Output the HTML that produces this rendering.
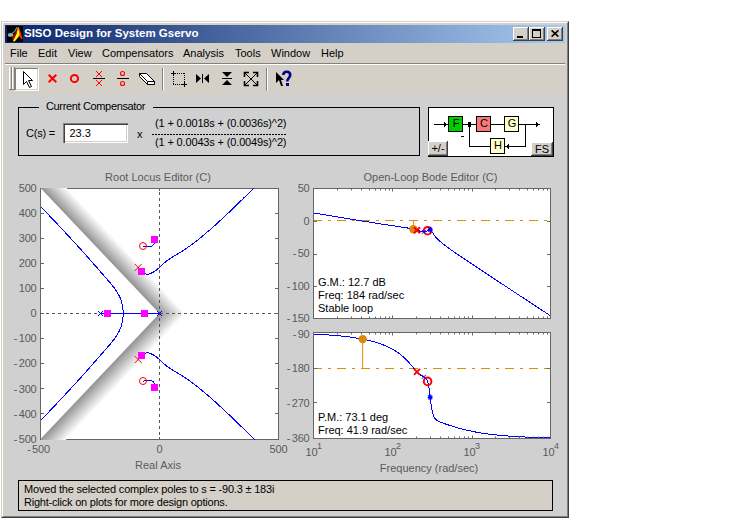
<!DOCTYPE html>
<html><head><meta charset="utf-8">
<style>
*{margin:0;padding:0;box-sizing:border-box}
html,body{width:750px;height:520px;overflow:hidden;background:#fff;font-family:"Liberation Sans",sans-serif}
.abs{position:absolute}
#win{position:absolute;left:1px;top:21px;width:568px;height:497px;background:#d4d0c8;
 border-top:1px solid #d4d0c8;border-left:1px solid #d4d0c8;border-right:1px solid #404040;border-bottom:1px solid #404040}
#win2{position:absolute;left:2px;top:22px;width:566px;height:495px;
 border-top:1px solid #fff;border-left:1px solid #fff;border-right:1px solid #808080;border-bottom:1px solid #808080}
#title{position:absolute;left:5px;top:25px;width:560px;height:18px;background:linear-gradient(to right,#0a246a,#a6caf0)}
#ttext{position:absolute;left:24px;top:27px;font-weight:bold;font-size:11.5px;color:#fff;white-space:nowrap;line-height:13px}
.tb{position:absolute;top:27px;width:16px;height:14px;background:#d4d0c8;
 box-shadow:inset -1px -1px #404040, inset 1px 1px #fff, inset -2px -2px #808080, inset 2px 2px #d4d0c8}
.menu{position:absolute;top:47px;font-size:11px;color:#000;white-space:nowrap;line-height:13px}
#figbg{position:absolute;left:5px;top:94px;width:560px;height:420px;background:#d0d0d0}
svg.fig{position:absolute;left:0;top:0}
.t11{font-size:11px;white-space:nowrap;line-height:13px;position:absolute;color:#000}
</style></head><body>
<div id="win"></div><div id="win2"></div>
<div id="title"></div>
<svg class="abs" style="left:7px;top:26px" width="16" height="16" viewBox="0 0 16 16">
 <rect width="16" height="16" fill="#000"/>
 <ellipse cx="3.6" cy="8.9" rx="2.8" ry="1.9" fill="#a3abae"/>
 <path d="M1,8.6 L2.5,7.6 M5.2,7 L7,6 L8.3,4.6 L9.2,2.5 L10,1.2" stroke="#1fb0b0" stroke-width="1.2" fill="none"/>
 <path d="M5,12.5 L6.5,9.5 L8.5,6.5 L10,3.5 L10.6,1 L12.2,4 L12.6,9 L9.5,13 L7.2,15.5 Z" fill="#b00000"/>
 <path d="M10.6,1 L12,1.2 L13.6,6 L15.6,12.8 L14.6,13.2 L12.4,10.5 Z" fill="#ff2a00"/>
 <path d="M10.6,3 L12.3,5.5 L12.4,9.5 L10,12.8 L7.6,15.6 L6,15 L7.6,12 L9.6,8 L10.2,5 Z" fill="#ffff00"/>
 <path d="M10.6,1.2 L11.9,2 L12.3,5.5 L10.4,3.6 Z" fill="#ff8c00"/>
</svg>
<div id="ttext">SISO Design for System Gservo</div>
<div class="tb" style="left:513px"><div class="abs" style="left:4px;top:9px;width:6px;height:2px;background:#000"></div></div>
<div class="tb" style="left:529px"><div class="abs" style="left:3px;top:2px;width:9px;height:9px;border:1px solid #000;border-top-width:2px"></div></div>
<div class="tb" style="left:547px"><svg class="abs" style="left:4px;top:3px" width="8" height="7"><path d="M0.6,0.4 L7.4,6.6 M7.4,0.4 L0.6,6.6" stroke="#000" stroke-width="1.6"/></svg></div>

<div class="menu" style="left:10px">File</div>
<div class="menu" style="left:38px">Edit</div>
<div class="menu" style="left:68px">View</div>
<div class="menu" style="left:102px">Compensators</div>
<div class="menu" style="left:183px">Analysis</div>
<div class="menu" style="left:235px">Tools</div>
<div class="menu" style="left:271px">Window</div>
<div class="menu" style="left:321px">Help</div>
<div class="abs" style="left:5px;top:63px;width:560px;height:1px;background:#808080"></div>
<div class="abs" style="left:5px;top:64px;width:560px;height:1px;background:#fff"></div>

<!-- toolbar -->
<svg class="abs" style="left:0;top:60px" width="300" height="34" shape-rendering="crispEdges">
 <g transform="translate(0,-60)">
 <!-- grip -->
 <rect x="9" y="67" width="1" height="23" fill="#fff"/><rect x="11" y="67" width="1" height="23" fill="#808080"/><rect x="9" y="89" width="3" height="1" fill="#808080"/>
 <rect x="12" y="67" width="1" height="23" fill="#fff"/><rect x="14" y="67" width="1" height="23" fill="#808080"/><rect x="12" y="89" width="3" height="1" fill="#808080"/>
 <!-- pressed button -->
 <rect x="15" y="68" width="24" height="23" fill="#fff"/><rect x="37" y="69" width="1" height="21" fill="#d4d0c8"/><rect x="16" y="89" width="22" height="1" fill="#d4d0c8"/>
 <rect x="15" y="68" width="23" height="1" fill="#808080"/><rect x="15" y="68" width="1" height="22" fill="#808080"/>
 <path d="M23.5,71.5 L23.5,84.5 L26.5,81.5 L29.5,87.5 L31.5,86.5 L28.5,80.5 L32.5,80.5 Z" fill="#fff" stroke="#000" stroke-width="1" shape-rendering="auto"/>
 <!-- red x -->
 <path d="M48.7,74.7 L56.3,82.3 M56.3,74.7 L48.7,82.3" stroke="#ff0000" stroke-width="2" shape-rendering="auto"/>
 <circle cx="74.5" cy="78.5" r="3.6" stroke="#ff0000" stroke-width="2" fill="none" shape-rendering="auto"/>
 <!-- x/x -->
 <path d="M96,71 L102,77 M102,71 L96,77 M96,80 L102,86 M102,80 L96,86" stroke="#ff0000" stroke-width="1" shape-rendering="auto"/>
 <rect x="93" y="78" width="12" height="1" fill="#000"/>
 <!-- o/o -->
 <circle cx="122.5" cy="73.5" r="2.0" stroke="#ff0000" stroke-width="1.15" fill="none" shape-rendering="auto"/>
 <circle cx="122.5" cy="83.5" r="2.0" stroke="#ff0000" stroke-width="1.15" fill="none" shape-rendering="auto"/>
 <rect x="117" y="78" width="12" height="1" fill="#000"/>
 <!-- eraser -->
 <g shape-rendering="auto">
 <path d="M139.5,73.5 L146.5,73.5 L154.5,81.5 L147.5,81.5 Z" fill="#fff" stroke="#000"/>
 <path d="M147.5,81.5 L154.5,81.5 L154.5,84.5 L147.5,84.5 Z" fill="#fff" stroke="#000"/>
 <path d="M139.5,73.5 L147.5,81.5 L147.5,84.5 L139.5,76.5 Z" fill="#fff" stroke="#000"/>
 </g>
 <rect x="162" y="68" width="1" height="22" fill="#808080"/><rect x="163" y="68" width="1" height="22" fill="#fff"/>
 <!-- zoom rect -->
 <path d="M173,73.5 h11 M173,84.5 h11 M173.5,73 v11 M184.5,73 v11" stroke="#000" stroke-dasharray="1 1"/>
 <rect x="171" y="73" width="5" height="1" fill="#000"/><rect x="173" y="71" width="1" height="5" fill="#000"/>
 <rect x="182" y="84" width="5" height="1" fill="#000"/><rect x="184" y="82" width="1" height="5" fill="#000"/>
 <!-- hzoom -->
 <path d="M196,74 L196,83 L201,78.5 Z M209,74 L209,83 L204,78.5 Z" fill="#000" shape-rendering="auto"/>
 <rect x="202" y="74" width="1" height="9" fill="#000"/>
 <!-- vzoom -->
 <path d="M222,72 L232,72 L227,77 Z M222,85 L232,85 L227,80 Z" fill="#000" shape-rendering="auto"/>
 <rect x="222" y="78" width="10" height="1" fill="#000"/>
 <!-- full view -->
 <g stroke="#000" fill="none" shape-rendering="auto">
 <path d="M245,73 L257,85 M257,73 L245,85"/>
 <path d="M244.5,77 V72.5 H249" stroke-width="1.6"/><path d="M253,72.5 H257.5 V77" stroke-width="1.6"/>
 <path d="M244.5,81 V85.5 H249" stroke-width="1.6"/><path d="M253,85.5 H257.5 V81" stroke-width="1.6"/>
 </g>
 <rect x="266" y="68" width="1" height="23" fill="#808080"/><rect x="267" y="68" width="1" height="23" fill="#fff"/>
 <!-- help -->
 <path d="M276,72 L276,83 L279,80 L281,86 L283,86 L281,80 L284,80 Z" fill="#000" shape-rendering="auto"/>
 <path d="M283.3,75 C283.3,70.6 290.2,70.6 290.2,75 C290.2,78.2 287.2,78 287.2,81.5" stroke="#000080" stroke-width="2.6" fill="none" shape-rendering="auto"/>
 <rect x="286" y="83" width="2.5" height="3" fill="#000080"/>
 </g>
</svg>

<div id="figbg"></div>
<!-- compensator panel -->
<div class="abs" style="left:18px;top:107px;width:402px;height:49px;border:1px solid #000"></div>
<div class="abs" style="left:39px;top:100px;width:114px;height:14px;background:#d0d0d0"></div>
<div class="t11" style="left:46px;top:100px;letter-spacing:-0.35px">Current Compensator</div>
<div class="t11" style="left:26px;top:127px;letter-spacing:-0.2px">C(s) =</div>
<div class="abs" style="left:63px;top:123px;width:65px;height:20px;background:#fff;box-shadow:inset 1px 1px #808080, inset 2px 2px #404040, inset -1px -1px #fff, inset -2px -2px #d4d0c8"></div>
<div class="t11" style="left:69.5px;top:127px">23.3</div>
<div class="t11" style="left:137px;top:128px">x</div>
<div class="t11" style="left:155px;top:117px;letter-spacing:-0.15px">(1 + 0.0018s + (0.0036s)^2)</div>
<div class="abs" style="left:152px;top:134px;width:134px;height:1px;background:repeating-linear-gradient(to right,#000 0 2px,transparent 2px 3px)"></div>
<div class="t11" style="left:155px;top:136px;letter-spacing:-0.15px">(1 + 0.0043s + (0.0049s)^2)</div>

<!-- block diagram -->
<div class="abs" style="left:428px;top:107px;width:126px;height:50px;background:#fff;border:1px solid #000"></div>
<svg class="abs" style="left:428px;top:107px" width="126" height="50" shape-rendering="crispEdges">
 <g transform="translate(-428,-107)">
 <rect x="434" y="124" width="14" height="1" fill="#000"/><path d="M444,122 L448,124.5 L444,127 Z" fill="#000"/>
 <rect x="448" y="116" width="14" height="15" fill="#00cc00" stroke="#000" stroke-width="1" transform="translate(0.5,0.5)"/>
 <rect x="463" y="124" width="14" height="1" fill="#000"/>
 <rect x="468" y="122" width="3" height="5" fill="#000"/>
 <rect x="476" y="116" width="14" height="15" fill="#f87878" stroke="#000" transform="translate(0.5,0.5)"/>
 <rect x="491" y="124" width="13" height="1" fill="#000"/>
 <rect x="504" y="116" width="14" height="15" fill="#ffffcc" stroke="#000" transform="translate(0.5,0.5)"/>
 <rect x="519" y="124" width="20" height="1" fill="#000"/><path d="M536,122 L540,124.5 L536,127 Z" fill="#000"/>
 <rect x="525" y="124" width="1" height="23" fill="#000"/>
 <rect x="505" y="146" width="21" height="1" fill="#000"/><path d="M509,144 L505,146.5 L509,149 Z" fill="#000"/>
 <rect x="490" y="138" width="14" height="15" fill="#ffffcc" stroke="#000" transform="translate(0.5,0.5)"/>
 <rect x="469" y="146" width="21" height="1" fill="#000"/>
 <rect x="469" y="127" width="1" height="20" fill="#000"/>
 <rect x="461" y="136" width="3" height="1" fill="#000"/>
 </g>
</svg>
<div class="abs" style="left:448px;top:115px;width:16px;height:16px;font-size:11px;text-align:center;line-height:17px;font-weight:normal">F</div>
<div class="abs" style="left:476px;top:115px;width:16px;height:16px;font-size:11px;text-align:center;line-height:17px">C</div>
<div class="abs" style="left:504px;top:115px;width:16px;height:16px;font-size:11px;text-align:center;line-height:17px">G</div>
<div class="abs" style="left:490px;top:137px;width:16px;height:16px;font-size:11px;text-align:center;line-height:17px">H</div>
<div class="abs" style="left:428px;top:141px;width:20px;height:15px;background:#d4d0c8;box-shadow:inset -1px -1px #404040, inset 1px 1px #fff, inset -2px -2px #808080;font-size:11px;text-align:center;line-height:14px">+/-</div>
<div class="abs" style="left:531px;top:142px;width:22px;height:14px;background:#d4d0c8;box-shadow:inset -1px -1px #404040, inset 1px 1px #fff, inset -2px -2px #808080;font-size:11px;text-align:center;line-height:14px">FS</div>

<svg class="fig" width="750" height="520">
<defs>
<clipPath id="rlclip"><rect x="41" y="188" width="237" height="252"/></clipPath>
<clipPath id="magclip"><rect x="313" y="188" width="238" height="131"/></clipPath>
<clipPath id="phclip"><rect x="313" y="332" width="238" height="107"/></clipPath>
<linearGradient id="gb" gradientUnits="userSpaceOnUse" x1="0" y1="0" x2="24" y2="0"><stop offset="0" stop-color="#8c8c8c"/><stop offset="0.35" stop-color="#b4b4b4"/><stop offset="1" stop-color="#ffffff"/></linearGradient>
</defs>
<rect x="40" y="188" width="239" height="252" fill="#fff"/>
<rect x="313" y="188" width="238" height="131" fill="#fff"/>
<rect x="313" y="332" width="238" height="107" fill="#fff"/>
<rect x="40.5" y="188.5" width="238" height="251" fill="none" stroke="#666" stroke-width="1"/>
<clipPath id="upc"><rect x="40" y="188" width="239" height="125.50"/></clipPath>
<clipPath id="loc"><rect x="40" y="313.50" width="239" height="126.50"/></clipPath>
<linearGradient id="gup" x1="0" y1="1" x2="0" y2="0"><stop offset="0" stop-color="#929292"/><stop offset="0.5" stop-color="#c9c9c9"/><stop offset="1" stop-color="#fff"/></linearGradient>
<linearGradient id="gdn" x1="0" y1="0" x2="0" y2="1"><stop offset="0" stop-color="#929292"/><stop offset="0.5" stop-color="#c9c9c9"/><stop offset="1" stop-color="#fff"/></linearGradient>
<g clip-path="url(#rlclip)">
<g clip-path="url(#upc)"><g transform="matrix(0.68807 0.72565 -0.72565 0.68807 159.50 313.50)"><rect x="-600" y="-19" width="700" height="19" fill="url(#gup)"/></g></g>
<g clip-path="url(#loc)"><g transform="matrix(0.68807 -0.72565 0.72565 0.68807 159.50 313.50)"><rect x="-600" y="0" width="700" height="19" fill="url(#gdn)"/></g></g>
</g>
<line x1="40" y1="313.5" x2="278" y2="313.5" stroke="#555" stroke-width="1" stroke-dasharray="3 3" stroke-dashoffset="0" shape-rendering="crispEdges"/>
<line x1="159.5" y1="189" x2="159.5" y2="439" stroke="#555" stroke-width="1" stroke-dasharray="3 3" stroke-dashoffset="3" shape-rendering="crispEdges"/>
<rect x="159" y="189" width="1" height="2" fill="#555"/><rect x="159" y="437" width="1" height="2" fill="#555"/>
<g clip-path="url(#rlclip)" fill="none" stroke="#0000ff" stroke-width="1" shape-rendering="crispEdges">
<path d="M154.7,238.4 L154.8,239.1 L154.9,239.8 L154.9,240.6 L154.9,241.4 L154.8,242.1 L154.6,242.7 L154.4,243.3 L154.1,243.9 L153.8,244.4 L153.5,244.8 L153.1,245.2 L152.6,245.6 L152.1,245.9 L151.5,246.1 L150.9,246.3 L150.2,246.4 L149.4,246.4 L148.6,246.4 L147.8,246.4 L147.1,246.3 L146.4,246.2 L145.7,246.2 L144.9,246.1 L144.2,246.0 L143.4,246.0 L143.0,246.0"/>
<path d="M154.7,388.6 L154.8,387.9 L154.9,387.2 L154.9,386.4 L154.9,385.6 L154.8,384.9 L154.6,384.3 L154.4,383.7 L154.1,383.1 L153.8,382.6 L153.5,382.2 L153.1,381.8 L152.6,381.4 L152.1,381.1 L151.5,380.9 L150.9,380.7 L150.2,380.6 L149.4,380.6 L148.6,380.6 L147.8,380.6 L147.1,380.7 L146.4,380.8 L145.7,380.8 L144.9,380.9 L144.2,381.0 L143.4,381.0 L143.0,381.0"/>
<path d="M138.2,267.5 L138.5,268.0 L138.7,268.5 L139.0,269.0 L139.4,269.5 L139.7,270.0 L140.0,270.5 L140.4,270.9 L140.8,271.3 L141.2,271.8 L141.6,272.1 L142.1,272.5 L142.6,272.9 L143.1,273.2 L143.7,273.5 L144.2,273.7 L144.9,273.9 L145.6,274.0 L146.3,274.1 L147.2,274.1 L148.0,274.1 L148.7,274.0 L149.4,273.8 L150.0,273.6 L150.6,273.4 L151.2,273.2 L151.8,272.9 L152.3,272.6 L152.9,272.4 L153.4,272.0 L154.0,271.7 L154.5,271.4 L155.0,271.0 L155.5,270.7 L155.9,270.3 L156.4,270.0 L156.9,269.6 L157.3,269.2 L157.8,268.8 L158.3,268.4 L158.7,268.0 L159.2,267.6 L159.6,267.2 L160.1,266.8 L160.5,266.4 L160.9,266.0 L161.4,265.6 L161.8,265.1 L162.3,264.7 L162.8,264.3 L163.2,263.8 L163.7,263.5 L164.1,263.1 L164.5,262.7 L165.0,262.3 L165.4,261.9 L165.9,261.6 L166.4,261.2 L166.9,260.8 L167.3,260.5 L167.8,260.1 L168.3,259.8 L168.8,259.4 L169.3,259.1 L169.8,258.8 L170.3,258.4 L170.8,258.1 L171.3,257.8 L171.8,257.5 L172.3,257.2 L172.9,256.8 L173.4,256.5 L174.0,256.2 L174.6,255.8 L175.1,255.5 L175.7,255.2 L176.2,254.8 L176.8,254.5 L177.3,254.2 L177.9,253.8 L178.4,253.5 L178.9,253.2 L179.5,252.8 L180.0,252.5 L180.6,252.2 L181.1,251.8 L181.6,251.5 L182.2,251.2 L182.7,250.8 L183.2,250.5 L183.8,250.1 L184.3,249.8 L184.8,249.4 L185.4,249.1 L185.9,248.7 L186.4,248.3 L187.0,248.0 L187.5,247.6 L188.0,247.2 L188.6,246.9 L189.1,246.5 L189.6,246.1 L190.0,245.8 L190.5,245.5 L191.0,245.1 L191.5,244.8 L191.9,244.4 L192.4,244.1 L192.9,243.7 L193.4,243.4 L193.8,243.0 L194.3,242.6 L194.8,242.3 L195.3,241.9 L195.8,241.5 L196.2,241.2 L196.7,240.8 L197.2,240.4 L197.7,240.0 L198.2,239.6 L198.7,239.2 L199.2,238.8 L199.7,238.4 L200.2,238.0 L200.7,237.6 L201.2,237.2 L201.7,236.8 L202.2,236.4 L202.7,236.0 L203.2,235.5 L203.6,235.2 L204.1,234.8 L204.5,234.4 L205.0,234.1 L205.4,233.7 L205.9,233.3 L206.3,232.9 L206.8,232.5 L207.2,232.1 L207.7,231.8 L208.1,231.4 L208.6,231.0 L209.0,230.6 L209.5,230.2 L210.0,229.8 L210.4,229.4 L210.9,228.9 L211.4,228.5 L211.8,228.1 L212.3,227.7 L212.8,227.3 L213.3,226.8 L213.7,226.4 L214.2,226.0 L214.7,225.6 L215.2,225.1 L215.7,224.7 L216.2,224.2 L216.7,223.8 L217.1,223.3 L217.6,222.9 L218.1,222.4 L218.6,222.0 L219.1,221.6 L219.5,221.2 L219.9,220.8 L220.3,220.4 L220.8,220.0 L221.2,219.6 L221.6,219.2 L222.0,218.8 L222.5,218.4 L222.9,218.0 L223.3,217.6 L223.8,217.2 L224.2,216.8 L224.7,216.4 L225.1,216.0 L225.6,215.6 L226.0,215.1 L226.4,214.7 L226.9,214.3 L227.4,213.9 L227.8,213.4 L228.3,213.0 L228.7,212.6 L229.2,212.1 L229.6,211.7 L230.1,211.2 L230.6,210.8 L231.0,210.3 L231.5,209.9 L232.0,209.4 L232.5,209.0 L232.9,208.5 L233.4,208.1 L233.9,207.6 L234.4,207.1 L234.9,206.7 L235.3,206.2 L235.8,205.7 L236.3,205.3 L236.8,204.8 L237.3,204.3 L237.8,203.8 L238.3,203.3 L238.8,202.9 L239.3,202.4 L239.8,201.9 L240.2,201.5 L240.6,201.1 L241.0,200.7 L241.4,200.3 L241.9,199.9 L242.3,199.5 L242.7,199.1 L243.1,198.7 L243.5,198.2 L243.9,197.8 L244.4,197.4 L244.8,197.0 L245.2,196.6 L245.6,196.2 L246.1,195.7 L246.5,195.3 L246.9,194.9 L247.3,194.5 L247.8,194.0 L248.2,193.6 L248.7,193.2 L249.1,192.8 L249.5,192.3 L250.0,191.9 L250.4,191.4 L250.9,191.0 L251.3,190.6 L251.7,190.1 L252.2,189.7 L252.6,189.2 L253.1,188.8 L253.5,188.3 L254.0,187.9 L254.5,187.4 L254.9,187.0 L255.4,186.5 L255.8,186.0 L256.3,185.6 L256.8,185.1 L257.2,184.6 L257.7,184.2 L258.2,183.7 L258.6,183.2 L259.1,182.8 L259.6,182.3 L260.1,181.8 L260.5,181.3 L261.0,180.8 L261.5,180.4 L262.0,179.9 L262.5,179.4 L263.0,178.9 L263.5,178.4 L263.9,177.9 L264.4,177.4 L264.9,176.9 L265.4,176.4 L265.9,175.9 L266.4,175.4 L266.9,174.9 L267.4,174.4 L267.9,173.9 L268.5,173.4 L269.0,172.8 L269.5,172.3 L270.0,171.8 L270.5,171.3 L271.0,170.8 L271.5,170.2 L272.1,169.7 L272.6,169.2 L273.1,168.6 L273.6,168.1 L274.2,167.6 L274.6,167.2 L275.0,166.8 L275.4,166.4 L275.8,166.0 L276.2,165.5 L276.6,165.1 L277.0,164.7 L277.4,164.3 L277.8,163.9 L278.2,163.5 L278.6,163.1 L279.0,162.6 L279.4,162.2 L279.8,161.8 L280.2,161.4 L280.7,161.0 L281.1,160.5 L281.5,160.1 L281.9,159.7 L282.3,159.3 L282.7,158.8 L283.2,158.4 L283.6,158.0 L284.0,157.5 L284.4,157.1 L284.9,156.7 L285.3,156.2 L285.7,155.8 L286.2,155.3 L286.6,154.9 L287.0,154.5 L287.4,154.0 L287.9,153.6 L288.3,153.1 L288.8,152.7 L289.2,152.2 L289.6,151.8 L290.1,151.3 L290.5,150.9 L291.0,150.4 L291.4,150.0 L291.9,149.5 L292.3,149.1 L292.7,148.6 L293.2,148.1 L293.6,147.7 L294.1,147.2 L294.6,146.7 L295.0,146.3 L295.5,145.8 L295.9,145.3 L296.4,144.9 L296.8,144.4 L297.3,143.9 L297.8,143.4 L298.2,143.0 L298.7,142.5 L299.2,142.0 L299.6,141.5 L300.1,141.0 L300.6,140.6 L301.0,140.1 L301.5,139.6 L302.0,139.1 L302.5,138.6 L302.9,138.1 L303.4,137.6 L303.9,137.1 L304.4,136.6 L304.9,136.1 L305.3,135.6 L305.8,135.1 L306.3,134.6 L306.8,134.1 L307.3,133.6 L307.8,133.1 L308.3,132.6 L308.8,132.1 L309.3,131.6 L309.8,131.1 L310.3,130.6 L310.8,130.1 L311.3,129.5 L311.8,129.0 L312.3,128.5 L312.8,128.0 L313.3,127.5 L313.8,126.9 L314.3,126.4 L314.8,125.9 L315.3,125.4 L315.8,124.8 L316.3,124.3 L316.9,123.8 L317.4,123.2 L317.9,122.7 L318.4,122.1 L318.9,121.6 L319.5,121.1 L320.0,120.5 L320.5,120.0 L321.0,119.4 L321.6,118.9 L322.1,118.3 L322.6,117.8 L323.2,117.2 L323.7,116.7 L324.2,116.1 L324.8,115.6 L325.3,115.0 L325.9,114.4 L326.4,113.9 L326.9,113.3 L327.5,112.7 L328.0,112.2 L328.6,111.6 L329.1,111.0 L329.7,110.5 L330.2,109.9 L330.8,109.3 L331.4,108.7 L331.9,108.2 L332.5,107.6 L333.0,107.0 L333.6,106.4 L334.2,105.8 L334.7,105.2 L335.3,104.6 L335.9,104.0 L336.4,103.5 L337.0,102.9 L337.6,102.3 L338.2,101.7 L338.8,101.1 L339.3,100.5 L339.9,99.9 L340.5,99.2 L341.1,98.6 L341.7,98.0 L342.3,97.4 L342.6,97.0 L343.0,96.6 L343.4,96.2 L343.8,95.8 L344.2,95.4 L344.6,95.0 L345.0,94.5 L345.4,94.1 L345.8,93.7 L346.2,93.3 L346.6,92.9 L347.0,92.5 L347.4,92.0 L347.8,91.6 L348.2,91.2 L348.6,90.8 L349.0,90.4 L349.4,89.9 L349.9,89.5 L350.3,89.1 L350.7,88.7 L351.1,88.2 L351.5,87.8 L351.9,87.4 L352.3,87.0 L352.7,86.5 L353.1,86.1 L353.5,85.7 L354.0,85.2 L354.4,84.8 L354.8,84.4 L355.2,83.9 L355.6,83.5 L356.0,83.1 L356.5,82.6 L356.9,82.2 L357.3,81.8 L357.7,81.3 L358.2,80.9 L358.6,80.4 L359.0,80.0 L359.4,79.6 L359.8,79.1 L360.3,78.7 L360.7,78.2 L361.1,77.8 L361.6,77.3 L362.0,76.9 L362.4,76.4 L362.9,76.0 L363.3,75.5 L363.7,75.1 L364.1,74.6 L364.6,74.2 L365.0,73.7 L365.5,73.3 L365.9,72.8 L366.3,72.3 L366.8,71.9 L367.2,71.4 L367.7,71.0 L368.1,70.5 L368.5,70.1 L369.0,69.6 L369.4,69.1 L369.9,68.7 L370.3,68.2 L370.8,67.7 L371.2,67.3 L371.7,66.8 L372.1,66.3 L372.6,65.9 L373.0,65.4 L373.5,64.9 L373.9,64.4 L374.4,64.0 L374.8,63.5 L375.3,63.0 L375.7,62.5 L376.2,62.1 L376.6,61.6 L377.1,61.1 L377.6,60.6 L378.0,60.2 L378.5,59.7 L378.9,59.2 L379.4,58.7 L379.9,58.2 L380.3,57.7 L380.8,57.3 L381.3,56.8 L381.7,56.3 L382.2,55.8 L382.7,55.3 L383.1,54.8 L383.6,54.3 L384.1,53.8 L384.6,53.3 L385.0,52.8 L385.5,52.3 L386.0,51.8 L386.4,51.3 L386.9,50.8 L387.4,50.3 L387.9,49.8 L388.4,49.3 L388.8,48.8 L389.3,48.3 L389.8,47.8 L390.3,47.3 L390.8,46.8 L391.3,46.3 L391.7,45.8 L392.2,45.3 L392.7,44.8 L393.2,44.3 L393.7,43.8 L394.2,43.3 L394.7,42.7 L395.2,42.2 L395.7,41.7 L396.2,41.2 L396.7,40.7 L397.2,40.1 L397.7,39.6 L398.2,39.1 L398.7,38.6 L399.2,38.1 L399.7,37.5 L400.2,37.0 L400.7,36.5 L401.2,36.0 L401.7,35.4 L402.2,34.9 L402.7,34.4 L403.2,33.8 L403.7,33.3 L404.2,32.8 L404.7,32.2 L405.2,31.7 L405.7,31.2 L406.3,30.6 L406.8,30.1 L407.3,29.5 L407.8,29.0 L408.3,28.5 L408.8,27.9 L409.4,27.4 L409.9,26.8 L410.4,26.3 L410.9,25.7 L411.5,25.2 L412.0,24.6 L412.5,24.1 L413.0,23.5 L413.6,23.0 L414.1,22.4 L414.6,21.9 L415.1,21.3 L415.7,20.8 L416.2,20.2 L416.7,19.6 L417.3,19.1 L417.8,18.5 L418.4,18.0 L418.9,17.4 L419.4,16.8 L420.0,16.3 L420.5,15.7 L421.1,15.1 L421.6,14.6 L422.1,14.0 L422.7,13.4 L423.2,12.9 L423.8,12.3 L424.3,11.7 L424.9,11.1 L425.4,10.6 L426.0,10.0 L426.5,9.4 L427.1,8.8 L427.6,8.2 L428.2,7.7 L428.8,7.1 L429.3,6.5 L429.9,5.9 L430.4,5.3 L431.0,4.7 L431.6,4.1 L432.1,3.5 L432.7,3.0 L433.2,2.4 L433.8,1.8 L434.4,1.2 L434.9,0.6 L435.5,-0.0 L436.1,-0.6 L436.7,-1.2 L437.2,-1.8 L437.8,-2.4 L438.4,-3.0 L439.0,-3.6 L439.5,-4.2 L440.1,-4.8 L440.7,-5.4 L441.3,-6.1 L441.9,-6.7 L442.4,-7.3 L443.0,-7.9 L443.6,-8.5 L444.2,-9.1 L444.8,-9.7 L445.4,-10.3 L446.0,-11.0 L446.6,-11.6 L447.1,-12.2 L447.7,-12.8 L448.3,-13.5 L448.9,-14.1 L449.5,-14.7 L450.1,-15.3 L450.7,-16.0 L451.3,-16.6 L451.9,-17.2 L452.5,-17.8 L453.1,-18.5 L453.7,-19.1 L454.3,-19.7 L454.9,-20.4 L455.6,-21.0 L456.2,-21.7 L456.8,-22.3 L457.4,-22.9 L458.0,-23.6 L458.6,-24.2 L459.2,-24.9 L459.8,-25.5 L460.5,-26.2 L461.1,-26.8 L461.7,-27.5 L462.3,-28.1 L462.9,-28.8 L463.6,-29.4 L464.2,-30.1 L464.8,-30.7 L465.4,-31.4 L466.1,-32.1 L466.7,-32.7 L467.3,-33.4 L468.0,-34.0 L468.6,-34.7 L469.2,-35.4 L469.9,-36.0 L470.5,-36.7 L471.1,-37.4 L471.8,-38.0 L472.4,-38.7 L473.1,-39.4 L473.7,-40.1 L474.3,-40.7 L475.0,-41.4 L475.6,-42.1 L476.3,-42.8 L476.9,-43.5 L477.6,-44.1 L478.2,-44.8 L478.9,-45.5 L479.5,-46.2 L480.2,-46.9 L480.8,-47.6 L481.5,-48.3 L482.2,-49.0 L482.8,-49.6 L483.5,-50.3 L484.1,-51.0 L484.8,-51.7 L485.5,-52.4 L486.1,-53.1 L486.8,-53.8 L487.5,-54.5 L488.1,-55.2 L488.8,-55.9 L489.5,-56.6 L490.2,-57.4 L490.8,-58.1 L491.5,-58.8 L492.2,-59.5 L492.9,-60.2 L493.6,-60.9 L494.2,-61.6 L494.9,-62.3 L495.6,-63.1 L496.3,-63.8 L497.0,-64.5 L497.7,-65.2 L498.4,-66.0 L499.0,-66.7 L499.7,-67.4 L500.4,-68.1 L501.1,-68.9 L501.8,-69.6 L502.5,-70.3 L503.2,-71.1 L503.9,-71.8 L504.6,-72.5 L505.3,-73.3 L506.0,-74.0 L506.7,-74.8 L507.4,-75.5 L508.1,-76.2 L508.9,-77.0 L509.6,-77.7 L510.3,-78.5 L511.0,-79.2 L511.7,-80.0 L512.4,-80.7 L513.1,-81.5 L513.9,-82.3 L514.6,-83.0 L515.3,-83.8 L516.0,-84.5 L516.8,-85.3 L517.5,-86.1 L518.2,-86.8 L518.9,-87.6 L519.7,-88.4 L520.4,-89.1 L521.1,-89.9 L521.9,-90.7 L522.6,-91.4 L523.3,-92.2 L524.1,-93.0 L524.8,-93.8 L525.6,-94.5 L526.3,-95.3 L527.0,-96.1 L527.8,-96.9 L528.5,-97.7 L529.3,-98.5 L530.0,-99.3 L530.8,-100.0 L531.5,-100.8 L532.3,-101.6 L533.1,-102.4 L533.8,-103.2 L534.6,-104.0 L535.3,-104.8 L536.1,-105.6 L536.9,-106.4 L537.6,-107.2 L538.4,-108.0 L539.2,-108.8 L539.9,-109.6 L540.7,-110.5 L541.5,-111.3 L542.2,-112.1 L543.0,-112.9 L543.8,-113.7 L544.6,-114.5 L545.4,-115.3 L545.7,-115.8 L546.1,-116.2 L546.5,-116.6 L546.9,-117.0 L547.3,-117.4 L547.7,-117.8 L548.1,-118.2 L548.5,-118.6 L548.9,-119.1 L549.3,-119.5 L549.7,-119.9 L550.1,-120.3 L550.5,-120.7 L550.8,-121.1 L551.2,-121.5 L551.6,-122.0 L552.0,-122.4 L552.4,-122.8 L552.8,-123.2 L553.2,-123.6 L553.6,-124.0 L554.0,-124.5 L554.4,-124.9 L554.8,-125.3 L555.2,-125.7 L555.6,-126.1 L556.0,-126.6 L556.4,-127.0 L556.8,-127.4 L557.2,-127.8 L557.6,-128.3 L558.0,-128.7 L558.4,-129.1 L558.8,-129.5 L559.2,-129.9 L559.6,-130.4 L560.0,-130.8 L560.4,-131.2 L560.9,-131.6 L561.3,-132.1 L561.7,-132.5 L562.1,-132.9 L562.5,-133.4 L562.9,-133.8 L563.3,-134.2 L563.7,-134.6 L564.1,-135.1 L564.5,-135.5 L564.9,-135.9 L565.3,-136.4 L565.7,-136.8 L566.1,-137.2 L566.6,-137.7 L567.0,-138.1 L567.4,-138.5 L567.8,-138.9 L568.2,-139.4 L568.6,-139.8 L569.0,-140.2 L569.4,-140.7 L569.9,-141.1 L570.3,-141.6 L570.7,-142.0 L571.1,-142.4 L571.5,-142.9 L571.9,-143.3 L572.3,-143.7 L572.8,-144.2 L573.2,-144.6 L573.6,-145.0 L574.0,-145.5 L574.4,-145.9 L574.8,-146.4 L575.3,-146.8 L575.7,-147.2 L576.1,-147.7 L576.5,-148.1 L576.9,-148.6 L577.4,-149.0 L577.8,-149.5 L578.2,-149.9 L578.6,-150.3 L579.1,-150.8 L579.5,-151.2 L579.9,-151.7 L580.3,-152.1 L580.7,-152.6 L581.2,-153.0 L581.6,-153.5 L582.0,-153.9 L582.4,-154.4 L582.9,-154.8 L583.3,-155.3 L583.7,-155.7 L584.1,-156.2 L584.6,-156.6 L585.0,-157.1 L585.4,-157.5 L585.9,-158.0 L586.3,-158.4 L586.7,-158.9 L587.1,-159.3 L587.6,-159.8"/>
<path d="M138.2,359.5 L138.5,359.0 L138.7,358.5 L139.0,358.0 L139.4,357.5 L139.7,357.0 L140.0,356.5 L140.4,356.1 L140.8,355.7 L141.2,355.2 L141.6,354.9 L142.1,354.5 L142.6,354.1 L143.1,353.8 L143.7,353.5 L144.2,353.3 L144.9,353.1 L145.6,353.0 L146.3,352.9 L147.2,352.9 L148.0,352.9 L148.7,353.0 L149.4,353.2 L150.0,353.4 L150.6,353.6 L151.2,353.8 L151.8,354.1 L152.3,354.4 L152.9,354.6 L153.4,355.0 L154.0,355.3 L154.5,355.6 L155.0,356.0 L155.5,356.3 L155.9,356.7 L156.4,357.0 L156.9,357.4 L157.3,357.8 L157.8,358.2 L158.3,358.6 L158.7,359.0 L159.2,359.4 L159.6,359.8 L160.1,360.2 L160.5,360.6 L160.9,361.0 L161.4,361.4 L161.8,361.9 L162.3,362.3 L162.8,362.7 L163.2,363.2 L163.7,363.5 L164.1,363.9 L164.5,364.3 L165.0,364.7 L165.4,365.1 L165.9,365.4 L166.4,365.8 L166.9,366.2 L167.3,366.5 L167.8,366.9 L168.3,367.2 L168.8,367.6 L169.3,367.9 L169.8,368.2 L170.3,368.6 L170.8,368.9 L171.3,369.2 L171.8,369.5 L172.3,369.8 L172.9,370.2 L173.4,370.5 L174.0,370.8 L174.6,371.2 L175.1,371.5 L175.7,371.8 L176.2,372.2 L176.8,372.5 L177.3,372.8 L177.9,373.2 L178.4,373.5 L178.9,373.8 L179.5,374.2 L180.0,374.5 L180.6,374.8 L181.1,375.2 L181.6,375.5 L182.2,375.8 L182.7,376.2 L183.2,376.5 L183.8,376.9 L184.3,377.2 L184.8,377.6 L185.4,377.9 L185.9,378.3 L186.4,378.7 L187.0,379.0 L187.5,379.4 L188.0,379.8 L188.6,380.1 L189.1,380.5 L189.6,380.9 L190.0,381.2 L190.5,381.5 L191.0,381.9 L191.5,382.2 L191.9,382.6 L192.4,382.9 L192.9,383.3 L193.4,383.6 L193.8,384.0 L194.3,384.4 L194.8,384.7 L195.3,385.1 L195.8,385.5 L196.2,385.8 L196.7,386.2 L197.2,386.6 L197.7,387.0 L198.2,387.4 L198.7,387.8 L199.2,388.2 L199.7,388.6 L200.2,389.0 L200.7,389.4 L201.2,389.8 L201.7,390.2 L202.2,390.6 L202.7,391.0 L203.2,391.5 L203.6,391.8 L204.1,392.2 L204.5,392.6 L205.0,392.9 L205.4,393.3 L205.9,393.7 L206.3,394.1 L206.8,394.5 L207.2,394.9 L207.7,395.2 L208.1,395.6 L208.6,396.0 L209.0,396.4 L209.5,396.8 L210.0,397.2 L210.4,397.6 L210.9,398.1 L211.4,398.5 L211.8,398.9 L212.3,399.3 L212.8,399.7 L213.3,400.2 L213.7,400.6 L214.2,401.0 L214.7,401.4 L215.2,401.9 L215.7,402.3 L216.2,402.8 L216.7,403.2 L217.1,403.7 L217.6,404.1 L218.1,404.6 L218.6,405.0 L219.1,405.4 L219.5,405.8 L219.9,406.2 L220.3,406.6 L220.8,407.0 L221.2,407.4 L221.6,407.8 L222.0,408.2 L222.5,408.6 L222.9,409.0 L223.3,409.4 L223.8,409.8 L224.2,410.2 L224.7,410.6 L225.1,411.0 L225.6,411.4 L226.0,411.9 L226.4,412.3 L226.9,412.7 L227.4,413.1 L227.8,413.6 L228.3,414.0 L228.7,414.4 L229.2,414.9 L229.6,415.3 L230.1,415.8 L230.6,416.2 L231.0,416.7 L231.5,417.1 L232.0,417.6 L232.5,418.0 L232.9,418.5 L233.4,418.9 L233.9,419.4 L234.4,419.9 L234.9,420.3 L235.3,420.8 L235.8,421.3 L236.3,421.7 L236.8,422.2 L237.3,422.7 L237.8,423.2 L238.3,423.7 L238.8,424.1 L239.3,424.6 L239.8,425.1 L240.2,425.5 L240.6,425.9 L241.0,426.3 L241.4,426.7 L241.9,427.1 L242.3,427.5 L242.7,427.9 L243.1,428.3 L243.5,428.8 L243.9,429.2 L244.4,429.6 L244.8,430.0 L245.2,430.4 L245.6,430.8 L246.1,431.3 L246.5,431.7 L246.9,432.1 L247.3,432.5 L247.8,433.0 L248.2,433.4 L248.7,433.8 L249.1,434.2 L249.5,434.7 L250.0,435.1 L250.4,435.6 L250.9,436.0 L251.3,436.4 L251.7,436.9 L252.2,437.3 L252.6,437.8 L253.1,438.2 L253.5,438.7 L254.0,439.1 L254.5,439.6 L254.9,440.0 L255.4,440.5 L255.8,441.0 L256.3,441.4 L256.8,441.9 L257.2,442.4 L257.7,442.8 L258.2,443.3 L258.6,443.8 L259.1,444.2 L259.6,444.7 L260.1,445.2 L260.5,445.7 L261.0,446.2 L261.5,446.6 L262.0,447.1 L262.5,447.6 L263.0,448.1 L263.5,448.6 L263.9,449.1 L264.4,449.6 L264.9,450.1 L265.4,450.6 L265.9,451.1 L266.4,451.6 L266.9,452.1 L267.4,452.6 L267.9,453.1 L268.5,453.6 L269.0,454.2 L269.5,454.7 L270.0,455.2 L270.5,455.7 L271.0,456.2 L271.5,456.8 L272.1,457.3 L272.6,457.8 L273.1,458.4 L273.6,458.9 L274.2,459.4 L274.6,459.8 L275.0,460.2 L275.4,460.6 L275.8,461.0 L276.2,461.5 L276.6,461.9 L277.0,462.3 L277.4,462.7 L277.8,463.1 L278.2,463.5 L278.6,463.9 L279.0,464.4 L279.4,464.8 L279.8,465.2 L280.2,465.6 L280.7,466.0 L281.1,466.5 L281.5,466.9 L281.9,467.3 L282.3,467.7 L282.7,468.2 L283.2,468.6 L283.6,469.0 L284.0,469.5 L284.4,469.9 L284.9,470.3 L285.3,470.8 L285.7,471.2 L286.2,471.7 L286.6,472.1 L287.0,472.5 L287.4,473.0 L287.9,473.4 L288.3,473.9 L288.8,474.3 L289.2,474.8 L289.6,475.2 L290.1,475.7 L290.5,476.1 L291.0,476.6 L291.4,477.0 L291.9,477.5 L292.3,477.9 L292.7,478.4 L293.2,478.9 L293.6,479.3 L294.1,479.8 L294.6,480.3 L295.0,480.7 L295.5,481.2 L295.9,481.7 L296.4,482.1 L296.8,482.6 L297.3,483.1 L297.8,483.6 L298.2,484.0 L298.7,484.5 L299.2,485.0 L299.6,485.5 L300.1,486.0 L300.6,486.4 L301.0,486.9 L301.5,487.4 L302.0,487.9 L302.5,488.4 L302.9,488.9 L303.4,489.4 L303.9,489.9 L304.4,490.4 L304.9,490.9 L305.3,491.4 L305.8,491.9 L306.3,492.4 L306.8,492.9 L307.3,493.4 L307.8,493.9 L308.3,494.4 L308.8,494.9 L309.3,495.4 L309.8,495.9 L310.3,496.4 L310.8,496.9 L311.3,497.5 L311.8,498.0 L312.3,498.5 L312.8,499.0 L313.3,499.5 L313.8,500.1 L314.3,500.6 L314.8,501.1 L315.3,501.6 L315.8,502.2 L316.3,502.7 L316.9,503.2 L317.4,503.8 L317.9,504.3 L318.4,504.9 L318.9,505.4 L319.5,505.9 L320.0,506.5 L320.5,507.0 L321.0,507.6 L321.6,508.1 L322.1,508.7 L322.6,509.2 L323.2,509.8 L323.7,510.3 L324.2,510.9 L324.8,511.4 L325.3,512.0 L325.9,512.6 L326.4,513.1 L326.9,513.7 L327.5,514.3 L328.0,514.8 L328.6,515.4 L329.1,516.0 L329.7,516.5 L330.2,517.1 L330.8,517.7 L331.4,518.3 L331.9,518.8 L332.5,519.4 L333.0,520.0 L333.6,520.6 L334.2,521.2 L334.7,521.8 L335.3,522.4 L335.9,523.0 L336.4,523.5 L337.0,524.1 L337.6,524.7 L338.2,525.3 L338.8,525.9 L339.3,526.5 L339.9,527.1 L340.5,527.8 L341.1,528.4 L341.7,529.0 L342.3,529.6 L342.6,530.0 L343.0,530.4 L343.4,530.8 L343.8,531.2 L344.2,531.6 L344.6,532.0 L345.0,532.5 L345.4,532.9 L345.8,533.3 L346.2,533.7 L346.6,534.1 L347.0,534.5 L347.4,535.0 L347.8,535.4 L348.2,535.8 L348.6,536.2 L349.0,536.6 L349.4,537.1 L349.9,537.5 L350.3,537.9 L350.7,538.3 L351.1,538.8 L351.5,539.2 L351.9,539.6 L352.3,540.0 L352.7,540.5 L353.1,540.9 L353.5,541.3 L354.0,541.8 L354.4,542.2 L354.8,542.6 L355.2,543.1 L355.6,543.5 L356.0,543.9 L356.5,544.4 L356.9,544.8 L357.3,545.2 L357.7,545.7 L358.2,546.1 L358.6,546.6 L359.0,547.0 L359.4,547.4 L359.8,547.9 L360.3,548.3 L360.7,548.8 L361.1,549.2 L361.6,549.7 L362.0,550.1 L362.4,550.6 L362.9,551.0 L363.3,551.5 L363.7,551.9 L364.1,552.4 L364.6,552.8 L365.0,553.3 L365.5,553.7 L365.9,554.2 L366.3,554.7 L366.8,555.1 L367.2,555.6 L367.7,556.0 L368.1,556.5 L368.5,556.9 L369.0,557.4 L369.4,557.9 L369.9,558.3 L370.3,558.8 L370.8,559.3 L371.2,559.7 L371.7,560.2 L372.1,560.7 L372.6,561.1 L373.0,561.6 L373.5,562.1 L373.9,562.6 L374.4,563.0 L374.8,563.5 L375.3,564.0 L375.7,564.5 L376.2,564.9 L376.6,565.4 L377.1,565.9 L377.6,566.4 L378.0,566.8 L378.5,567.3 L378.9,567.8 L379.4,568.3 L379.9,568.8 L380.3,569.3 L380.8,569.7 L381.3,570.2 L381.7,570.7 L382.2,571.2 L382.7,571.7 L383.1,572.2 L383.6,572.7 L384.1,573.2 L384.6,573.7 L385.0,574.2 L385.5,574.7 L386.0,575.2 L386.4,575.7 L386.9,576.2 L387.4,576.7 L387.9,577.2 L388.4,577.7 L388.8,578.2 L389.3,578.7 L389.8,579.2 L390.3,579.7 L390.8,580.2 L391.3,580.7 L391.7,581.2 L392.2,581.7 L392.7,582.2 L393.2,582.7 L393.7,583.2 L394.2,583.7 L394.7,584.3 L395.2,584.8 L395.7,585.3 L396.2,585.8 L396.7,586.3 L397.2,586.9 L397.7,587.4 L398.2,587.9 L398.7,588.4 L399.2,588.9 L399.7,589.5 L400.2,590.0 L400.7,590.5 L401.2,591.0 L401.7,591.6 L402.2,592.1 L402.7,592.6 L403.2,593.2 L403.7,593.7 L404.2,594.2 L404.7,594.8 L405.2,595.3 L405.7,595.8 L406.3,596.4 L406.8,596.9 L407.3,597.5 L407.8,598.0 L408.3,598.5 L408.8,599.1 L409.4,599.6 L409.9,600.2 L410.4,600.7 L410.9,601.3 L411.5,601.8 L412.0,602.4 L412.5,602.9 L413.0,603.5 L413.6,604.0 L414.1,604.6 L414.6,605.1 L415.1,605.7 L415.7,606.2 L416.2,606.8 L416.7,607.4 L417.3,607.9 L417.8,608.5 L418.4,609.0 L418.9,609.6 L419.4,610.2 L420.0,610.7 L420.5,611.3 L421.1,611.9 L421.6,612.4 L422.1,613.0 L422.7,613.6 L423.2,614.1 L423.8,614.7 L424.3,615.3 L424.9,615.9 L425.4,616.4 L426.0,617.0 L426.5,617.6 L427.1,618.2 L427.6,618.8 L428.2,619.3 L428.8,619.9 L429.3,620.5 L429.9,621.1 L430.4,621.7 L431.0,622.3 L431.6,622.9 L432.1,623.5 L432.7,624.0 L433.2,624.6 L433.8,625.2 L434.4,625.8 L434.9,626.4 L435.5,627.0 L436.1,627.6 L436.7,628.2 L437.2,628.8 L437.8,629.4 L438.4,630.0 L439.0,630.6 L439.5,631.2 L440.1,631.8 L440.7,632.4 L441.3,633.1 L441.9,633.7 L442.4,634.3 L443.0,634.9 L443.6,635.5 L444.2,636.1 L444.8,636.7 L445.4,637.3 L446.0,638.0 L446.6,638.6 L447.1,639.2 L447.7,639.8 L448.3,640.5 L448.9,641.1 L449.5,641.7 L450.1,642.3 L450.7,643.0 L451.3,643.6 L451.9,644.2 L452.5,644.8 L453.1,645.5 L453.7,646.1 L454.3,646.7 L454.9,647.4 L455.6,648.0 L456.2,648.7 L456.8,649.3 L457.4,649.9 L458.0,650.6 L458.6,651.2 L459.2,651.9 L459.8,652.5 L460.5,653.2 L461.1,653.8 L461.7,654.5 L462.3,655.1 L462.9,655.8 L463.6,656.4 L464.2,657.1 L464.8,657.7 L465.4,658.4 L466.1,659.1 L466.7,659.7 L467.3,660.4 L468.0,661.0 L468.6,661.7 L469.2,662.4 L469.9,663.0 L470.5,663.7 L471.1,664.4 L471.8,665.0 L472.4,665.7 L473.1,666.4 L473.7,667.1 L474.3,667.7 L475.0,668.4 L475.6,669.1 L476.3,669.8 L476.9,670.5 L477.6,671.1 L478.2,671.8 L478.9,672.5 L479.5,673.2 L480.2,673.9 L480.8,674.6 L481.5,675.3 L482.2,676.0 L482.8,676.6 L483.5,677.3 L484.1,678.0 L484.8,678.7 L485.5,679.4 L486.1,680.1 L486.8,680.8 L487.5,681.5 L488.1,682.2 L488.8,682.9 L489.5,683.6 L490.2,684.4 L490.8,685.1 L491.5,685.8 L492.2,686.5 L492.9,687.2 L493.6,687.9 L494.2,688.6 L494.9,689.3 L495.6,690.1 L496.3,690.8 L497.0,691.5 L497.7,692.2 L498.4,693.0 L499.0,693.7 L499.7,694.4 L500.4,695.1 L501.1,695.9 L501.8,696.6 L502.5,697.3 L503.2,698.1 L503.9,698.8 L504.6,699.5 L505.3,700.3 L506.0,701.0 L506.7,701.8 L507.4,702.5 L508.1,703.2 L508.9,704.0 L509.6,704.7 L510.3,705.5 L511.0,706.2 L511.7,707.0 L512.4,707.7 L513.1,708.5 L513.9,709.3 L514.6,710.0 L515.3,710.8 L516.0,711.5 L516.8,712.3 L517.5,713.1 L518.2,713.8 L518.9,714.6 L519.7,715.4 L520.4,716.1 L521.1,716.9 L521.9,717.7 L522.6,718.4 L523.3,719.2 L524.1,720.0 L524.8,720.8 L525.6,721.5 L526.3,722.3 L527.0,723.1 L527.8,723.9 L528.5,724.7 L529.3,725.5 L530.0,726.3 L530.8,727.0 L531.5,727.8 L532.3,728.6 L533.1,729.4 L533.8,730.2 L534.6,731.0 L535.3,731.8 L536.1,732.6 L536.9,733.4 L537.6,734.2 L538.4,735.0 L539.2,735.8 L539.9,736.6 L540.7,737.5 L541.5,738.3 L542.2,739.1 L543.0,739.9 L543.8,740.7 L544.6,741.5 L545.4,742.3 L545.7,742.8 L546.1,743.2 L546.5,743.6 L546.9,744.0 L547.3,744.4 L547.7,744.8 L548.1,745.2 L548.5,745.6 L548.9,746.1 L549.3,746.5 L549.7,746.9 L550.1,747.3 L550.5,747.7 L550.8,748.1 L551.2,748.5 L551.6,749.0 L552.0,749.4 L552.4,749.8 L552.8,750.2 L553.2,750.6 L553.6,751.0 L554.0,751.5 L554.4,751.9 L554.8,752.3 L555.2,752.7 L555.6,753.1 L556.0,753.6 L556.4,754.0 L556.8,754.4 L557.2,754.8 L557.6,755.3 L558.0,755.7 L558.4,756.1 L558.8,756.5 L559.2,756.9 L559.6,757.4 L560.0,757.8 L560.4,758.2 L560.9,758.6 L561.3,759.1 L561.7,759.5 L562.1,759.9 L562.5,760.4 L562.9,760.8 L563.3,761.2 L563.7,761.6 L564.1,762.1 L564.5,762.5 L564.9,762.9 L565.3,763.4 L565.7,763.8 L566.1,764.2 L566.6,764.7 L567.0,765.1 L567.4,765.5 L567.8,765.9 L568.2,766.4 L568.6,766.8 L569.0,767.2 L569.4,767.7 L569.9,768.1 L570.3,768.6 L570.7,769.0 L571.1,769.4 L571.5,769.9 L571.9,770.3 L572.3,770.7 L572.8,771.2 L573.2,771.6 L573.6,772.0 L574.0,772.5 L574.4,772.9 L574.8,773.4 L575.3,773.8 L575.7,774.2 L576.1,774.7 L576.5,775.1 L576.9,775.6 L577.4,776.0 L577.8,776.5 L578.2,776.9 L578.6,777.3 L579.1,777.8 L579.5,778.2 L579.9,778.7 L580.3,779.1 L580.7,779.6 L581.2,780.0 L581.6,780.5 L582.0,780.9 L582.4,781.4 L582.9,781.8 L583.3,782.3 L583.7,782.7 L584.1,783.2 L584.6,783.6 L585.0,784.1 L585.4,784.5 L585.9,785.0 L586.3,785.4 L586.7,785.9 L587.1,786.3 L587.6,786.8"/>
<path d="M123.1,313.5 L123.1,312.2 L123.1,311.1 L123.0,309.7 L122.9,308.7 L122.8,307.9 L122.7,307.2 L122.5,306.2 L122.4,305.4 L122.2,304.6 L122.1,303.9 L121.9,303.3 L121.7,302.5 L121.5,301.7 L121.3,301.0 L121.1,300.3 L120.8,299.7 L120.6,299.1 L120.4,298.5 L120.1,297.8 L119.8,297.2 L119.5,296.5 L119.2,295.9 L118.9,295.4 L118.6,294.8 L118.4,294.3 L118.0,293.7 L117.7,293.1 L117.3,292.5 L117.0,292.0 L116.7,291.5 L116.3,290.9 L116.0,290.5 L115.7,290.0 L115.3,289.4 L114.9,288.9 L114.5,288.4 L114.2,287.9 L113.8,287.4 L113.4,286.9 L113.1,286.5 L112.7,286.0 L112.3,285.5 L111.9,285.0 L111.5,284.5 L111.1,284.0 L110.7,283.6 L110.4,283.1 L110.0,282.6 L109.6,282.2 L109.2,281.7 L108.8,281.3 L108.5,280.9 L108.1,280.4 L107.7,280.0 L107.3,279.6 L106.9,279.1 L106.5,278.6 L106.1,278.1 L105.7,277.6 L105.3,277.2 L104.9,276.7 L104.4,276.2 L104.0,275.8 L103.6,275.3 L103.2,274.8 L102.8,274.3 L102.4,273.9 L102.0,273.4 L101.6,272.9 L101.2,272.5 L100.7,272.0 L100.3,271.5 L99.9,271.0 L99.5,270.6 L99.1,270.1 L98.7,269.7 L98.3,269.2 L97.9,268.8 L97.6,268.4 L97.2,267.9 L96.8,267.5 L96.4,267.1 L96.0,266.6 L95.6,266.2 L95.3,265.7 L94.9,265.3 L94.5,264.9 L94.1,264.4 L93.7,264.0 L93.3,263.5 L92.9,263.0 L92.5,262.6 L92.1,262.1 L91.7,261.7 L91.2,261.2 L90.8,260.7 L90.4,260.3 L90.0,259.8 L89.6,259.3 L89.2,258.8 L88.7,258.3 L88.3,257.9 L88.0,257.5 L87.6,257.1 L87.2,256.6 L86.8,256.2 L86.4,255.8 L86.0,255.3 L85.7,254.9 L85.3,254.4 L84.9,254.0 L84.5,253.6 L84.1,253.1 L83.6,252.7 L83.2,252.2 L82.8,251.7 L82.4,251.3 L82.0,250.8 L81.6,250.3 L81.2,249.9 L80.7,249.4 L80.3,248.9 L79.9,248.5 L79.4,248.0 L79.0,247.5 L78.6,247.0 L78.1,246.5 L77.7,246.1 L77.4,245.7 L77.0,245.3 L76.6,244.8 L76.2,244.4 L75.8,244.0 L75.4,243.6 L75.0,243.1 L74.6,242.7 L74.2,242.2 L73.8,241.8 L73.4,241.4 L73.0,240.9 L72.6,240.5 L72.2,240.0 L71.8,239.6 L71.3,239.1 L70.9,238.7 L70.5,238.2 L70.1,237.7 L69.7,237.3 L69.2,236.8 L68.8,236.3 L68.4,235.9 L67.9,235.4 L67.5,234.9 L67.0,234.5 L66.6,234.0 L66.1,233.5 L65.7,233.0 L65.2,232.5 L64.8,232.0 L64.3,231.5 L63.9,231.1 L63.4,230.6 L63.0,230.1 L62.6,229.7 L62.2,229.3 L61.8,228.9 L61.5,228.5 L61.1,228.0 L60.7,227.6 L60.3,227.2 L59.9,226.8 L59.4,226.3 L59.0,225.9 L58.6,225.5 L58.2,225.0 L57.8,224.6 L57.4,224.1 L57.0,223.7 L56.6,223.2 L56.1,222.8 L55.7,222.3 L55.3,221.9 L54.9,221.4 L54.4,221.0 L54.0,220.5 L53.6,220.1 L53.1,219.6 L52.7,219.2 L52.3,218.7 L51.8,218.2 L51.4,217.8 L50.9,217.3 L50.5,216.8 L50.0,216.3 L49.6,215.9 L49.1,215.4 L48.7,214.9 L48.2,214.4 L47.8,213.9 L47.3,213.4 L46.8,213.0 L46.4,212.5 L45.9,212.0 L45.4,211.5 L45.0,211.0 L44.5,210.5 L44.0,210.0 L43.5,209.5 L43.1,209.0 L42.6,208.4 L42.1,207.9 L41.7,207.5 L41.3,207.1 L40.9,206.7 L40.5,206.3 L40.1,205.9 L39.7,205.4 L39.3,205.0 L38.9,204.6 L38.5,204.2 L38.1,203.8 L37.7,203.3 L37.3,202.9 L36.9,202.5 L36.5,202.0 L36.1,201.6 L35.6,201.2 L35.2,200.7 L34.8,200.3 L34.4,199.9 L34.0,199.4 L33.6,199.0 L33.1,198.5 L32.7,198.1 L32.3,197.6 L31.9,197.2 L31.4,196.7 L31.0,196.3 L30.6,195.8 L30.1,195.4 L29.7,194.9 L29.3,194.5 L28.8,194.0 L28.4,193.5 L27.9,193.1 L27.5,192.6 L27.0,192.1 L26.6,191.7 L26.2,191.2 L25.7,190.7 L25.2,190.3 L24.8,189.8 L24.3,189.3 L23.9,188.8 L23.4,188.3 L23.0,187.9 L22.5,187.4 L22.0,186.9 L21.6,186.4 L21.1,185.9 L20.6,185.4 L20.2,184.9 L19.7,184.4 L19.2,183.9 L18.7,183.4 L18.3,182.9 L17.8,182.4 L17.3,181.9 L16.8,181.4 L16.3,180.9 L15.8,180.4 L15.3,179.9 L14.9,179.4 L14.4,178.9 L13.9,178.3 L13.4,177.8 L12.9,177.3 L12.4,176.8 L11.9,176.2 L11.4,175.7 L10.9,175.2 L10.3,174.7 L9.8,174.1 L9.3,173.6 L8.8,173.0 L8.3,172.5 L7.8,172.0 L7.3,171.4 L6.9,171.0 L6.5,170.6 L6.1,170.2 L5.7,169.8 L5.3,169.4 L4.9,168.9 L4.5,168.5 L4.1,168.1 L3.7,167.7 L3.3,167.3 L2.9,166.9 L2.5,166.4 L2.1,166.0 L1.7,165.6 L1.3,165.2 L0.9,164.7 L0.5,164.3 L0.0,163.9 L-0.4,163.4 L-0.8,163.0 L-1.2,162.6 L-1.6,162.1 L-2.0,161.7 L-2.4,161.3 L-2.9,160.8 L-3.3,160.4 L-3.7,159.9 L-4.1,159.5 L-4.5,159.1 L-5.0,158.6 L-5.4,158.2 L-5.8,157.7 L-6.2,157.3 L-6.7,156.8 L-7.1,156.4 L-7.5,155.9 L-8.0,155.5 L-8.4,155.0 L-8.8,154.6 L-9.3,154.1 L-9.7,153.6 L-10.2,153.2 L-10.6,152.7 L-11.0,152.3 L-11.5,151.8 L-11.9,151.3 L-12.4,150.9 L-12.8,150.4 L-13.3,149.9 L-13.7,149.5 L-14.2,149.0 L-14.6,148.5 L-15.1,148.0 L-15.5,147.6 L-16.0,147.1 L-16.4,146.6 L-16.9,146.1 L-17.4,145.7 L-17.8,145.2 L-18.3,144.7 L-18.7,144.2 L-19.2,143.7 L-19.7,143.2 L-20.1,142.7 L-20.6,142.2 L-21.1,141.8 L-21.6,141.3 L-22.0,140.8 L-22.5,140.3 L-23.0,139.8 L-23.4,139.3 L-23.9,138.8 L-24.4,138.3 L-24.9,137.8 L-25.4,137.3 L-25.9,136.8 L-26.3,136.2 L-26.8,135.7 L-27.3,135.2 L-27.8,134.7 L-28.3,134.2 L-28.8,133.7 L-29.3,133.2 L-29.8,132.7 L-30.3,132.1 L-30.8,131.6 L-31.3,131.1 L-31.8,130.6 L-32.3,130.0 L-32.8,129.5 L-33.3,129.0 L-33.8,128.5 L-34.3,127.9 L-34.8,127.4 L-35.3,126.9 L-35.8,126.3 L-36.3,125.8 L-36.8,125.2 L-37.4,124.7 L-37.9,124.2 L-38.4,123.6 L-38.9,123.1 L-39.4,122.5 L-40.0,122.0 L-40.5,121.4 L-41.0,120.9 L-41.5,120.3 L-42.1,119.8 L-42.6,119.2 L-43.1,118.7 L-43.7,118.1 L-44.2,117.5 L-44.7,117.0 L-45.3,116.4 L-45.8,115.8 L-46.4,115.3 L-46.9,114.7 L-47.5,114.1 L-48.0,113.6 L-48.6,113.0 L-49.1,112.4 L-49.7,111.8 L-50.2,111.2 L-50.8,110.7 L-51.3,110.1 L-51.9,109.5 L-52.4,108.9 L-53.0,108.3 L-53.6,107.7 L-54.1,107.1 L-54.7,106.6 L-55.3,106.0 L-55.8,105.4 L-56.4,104.8 L-57.0,104.2 L-57.5,103.6 L-58.1,103.0 L-58.7,102.4 L-59.3,101.8 L-59.8,101.1 L-60.4,100.5 L-61.0,99.9 L-61.6,99.3 L-62.0,98.9 L-62.4,98.5 L-62.8,98.1 L-63.2,97.7 L-63.6,97.3 L-64.0,96.8 L-64.3,96.4 L-64.7,96.0 L-65.1,95.6 L-65.5,95.2 L-65.9,94.8 L-66.3,94.3 L-66.7,93.9 L-67.1,93.5 L-67.5,93.1 L-67.9,92.7 L-68.3,92.2 L-68.7,91.8 L-69.2,91.4 L-69.6,91.0 L-70.0,90.5 L-70.4,90.1 L-70.8,89.7 L-71.2,89.3 L-71.6,88.8 L-72.0,88.4 L-72.4,88.0 L-72.8,87.5 L-73.2,87.1 L-73.7,86.7 L-74.1,86.2 L-74.5,85.8 L-74.9,85.4 L-75.3,84.9 L-75.7,84.5 L-76.2,84.0 L-76.6,83.6 L-77.0,83.2 L-77.4,82.7 L-77.8,82.3 L-78.3,81.8 L-78.7,81.4 L-79.1,81.0 L-79.5,80.5 L-79.9,80.1 L-80.4,79.6 L-80.8,79.2 L-81.2,78.7 L-81.7,78.3 L-82.1,77.8 L-82.5,77.4 L-82.9,76.9 L-83.4,76.5 L-83.8,76.0 L-84.2,75.6 L-84.7,75.1 L-85.1,74.6 L-85.5,74.2 L-86.0,73.7 L-86.4,73.3 L-86.9,72.8 L-87.3,72.3 L-87.7,71.9 L-88.2,71.4 L-88.6,71.0 L-89.1,70.5 L-89.5,70.0 L-90.0,69.6 L-90.4,69.1 L-90.8,68.6 L-91.3,68.2 L-91.7,67.7 L-92.2,67.2 L-92.6,66.8 L-93.1,66.3 L-93.5,65.8 L-94.0,65.3 L-94.4,64.9 L-94.9,64.4 L-95.3,63.9 L-95.8,63.4 L-96.3,62.9 L-96.7,62.5 L-97.2,62.0 L-97.6,61.5 L-98.1,61.0 L-98.6,60.5 L-99.0,60.1 L-99.5,59.6 L-99.9,59.1 L-100.4,58.6 L-100.9,58.1 L-101.3,57.6 L-101.8,57.1 L-102.3,56.6 L-102.7,56.1 L-103.2,55.7 L-103.7,55.2 L-104.1,54.7 L-104.6,54.2 L-105.1,53.7 L-105.6,53.2 L-106.0,52.7 L-106.5,52.2 L-107.0,51.7 L-107.5,51.2 L-107.9,50.7 L-108.4,50.2 L-108.9,49.7 L-109.4,49.2 L-109.9,48.7 L-110.4,48.1 L-110.8,47.6 L-111.3,47.1 L-111.8,46.6 L-112.3,46.1 L-112.8,45.6 L-113.3,45.1 L-113.8,44.6 L-114.3,44.1 L-114.7,43.5 L-115.2,43.0 L-115.7,42.5 L-116.2,42.0 L-116.7,41.5 L-117.2,40.9 L-117.7,40.4 L-118.2,39.9 L-118.7,39.4 L-119.2,38.9 L-119.7,38.3 L-120.2,37.8 L-120.7,37.3 L-121.2,36.7 L-121.7,36.2 L-122.2,35.7 L-122.7,35.2 L-123.2,34.6 L-123.7,34.1 L-124.3,33.5 L-124.8,33.0 L-125.3,32.5 L-125.8,31.9 L-126.3,31.4 L-126.8,30.9 L-127.3,30.3 L-127.9,29.8 L-128.4,29.2 L-128.9,28.7 L-129.4,28.1 L-129.9,27.6 L-130.4,27.0 L-131.0,26.5 L-131.5,25.9 L-132.0,25.4 L-132.5,24.8 L-133.1,24.3 L-133.6,23.7 L-134.1,23.2 L-134.7,22.6 L-135.2,22.1 L-135.7,21.5 L-136.2,21.0 L-136.8,20.4 L-137.3,19.8 L-137.9,19.3 L-138.4,18.7 L-138.9,18.1 L-139.5,17.6 L-140.0,17.0 L-140.5,16.4 L-141.1,15.9 L-141.6,15.3 L-142.2,14.7 L-142.7,14.2 L-143.3,13.6 L-143.8,13.0 L-144.4,12.4 L-144.9,11.9 L-145.5,11.3 L-146.0,10.7 L-146.6,10.1 L-147.1,9.5 L-147.7,9.0 L-148.2,8.4 L-148.8,7.8 L-149.3,7.2 L-149.9,6.6 L-150.5,6.0 L-151.0,5.4 L-151.6,4.9 L-152.1,4.3 L-152.7,3.7 L-153.3,3.1 L-153.8,2.5 L-154.4,1.9 L-155.0,1.3 L-155.5,0.7 L-156.1,0.1 L-156.7,-0.5 L-157.2,-1.1 L-157.8,-1.7 L-158.4,-2.3 L-159.0,-2.9 L-159.5,-3.5 L-160.1,-4.1 L-160.7,-4.7 L-161.3,-5.4 L-161.9,-6.0 L-162.4,-6.6 L-163.0,-7.2 L-163.6,-7.8 L-164.2,-8.4 L-164.8,-9.0 L-165.4,-9.7 L-166.0,-10.3 L-166.6,-10.9 L-167.1,-11.5 L-167.7,-12.1 L-168.3,-12.8 L-168.9,-13.4 L-169.5,-14.0 L-170.1,-14.6 L-170.7,-15.3 L-171.3,-15.9 L-171.9,-16.5 L-172.5,-17.2 L-173.1,-17.8 L-173.7,-18.4 L-174.3,-19.1 L-174.9,-19.7 L-175.5,-20.3 L-176.2,-21.0 L-176.8,-21.6 L-177.4,-22.3 L-178.0,-22.9 L-178.6,-23.6 L-179.2,-24.2 L-179.8,-24.9 L-180.4,-25.5 L-181.1,-26.1 L-181.7,-26.8 L-182.3,-27.5 L-182.9,-28.1 L-183.5,-28.8 L-184.2,-29.4 L-184.8,-30.1 L-185.4,-30.7 L-186.0,-31.4 L-186.7,-32.1 L-187.3,-32.7 L-187.9,-33.4 L-188.6,-34.0 L-189.2,-34.7 L-189.8,-35.4 L-190.5,-36.0 L-191.1,-36.7 L-191.7,-37.4 L-192.4,-38.1 L-193.0,-38.7 L-193.7,-39.4 L-194.3,-40.1 L-195.0,-40.8 L-195.6,-41.4 L-196.3,-42.1 L-196.9,-42.8 L-197.5,-43.5 L-198.2,-44.2 L-198.9,-44.9 L-199.5,-45.5 L-200.2,-46.2 L-200.8,-46.9 L-201.5,-47.6 L-202.1,-48.3 L-202.8,-49.0 L-203.4,-49.7 L-204.1,-50.4 L-204.8,-51.1 L-205.4,-51.8 L-206.1,-52.5 L-206.8,-53.2 L-207.4,-53.9 L-208.1,-54.6 L-208.8,-55.3 L-209.4,-56.0 L-210.1,-56.7 L-210.8,-57.4 L-211.5,-58.1 L-212.2,-58.8 L-212.8,-59.6 L-213.5,-60.3 L-214.2,-61.0 L-214.9,-61.7 L-215.6,-62.4 L-216.2,-63.1 L-216.9,-63.9 L-217.6,-64.6 L-218.3,-65.3 L-219.0,-66.0 L-219.7,-66.8 L-220.4,-67.5 L-221.1,-68.2 L-221.8,-69.0 L-222.5,-69.7 L-223.2,-70.4 L-223.9,-71.2 L-224.6,-71.9 L-225.3,-72.6 L-226.0,-73.4 L-226.7,-74.1 L-227.4,-74.9 L-228.1,-75.6 L-228.8,-76.4 L-229.5,-77.1 L-230.2,-77.9 L-230.9,-78.6 L-231.6,-79.4 L-232.4,-80.1 L-233.1,-80.9 L-233.8,-81.6 L-234.5,-82.4 L-235.2,-83.1 L-236.0,-83.9 L-236.7,-84.7 L-237.4,-85.4 L-238.1,-86.2 L-238.9,-87.0 L-239.6,-87.7 L-240.3,-88.5 L-241.1,-89.3 L-241.8,-90.0 L-242.5,-90.8 L-243.3,-91.6 L-244.0,-92.4 L-244.7,-93.1 L-245.5,-93.9 L-246.2,-94.7 L-247.0,-95.5 L-247.7,-96.3 L-248.5,-97.0 L-249.2,-97.8 L-250.0,-98.6 L-250.7,-99.4 L-251.5,-100.2 L-252.2,-101.0 L-253.0,-101.8 L-253.7,-102.6 L-254.5,-103.4 L-255.2,-104.2 L-256.0,-105.0 L-256.8,-105.8 L-257.5,-106.6 L-258.3,-107.4 L-259.1,-108.2 L-259.8,-109.0 L-260.6,-109.8 L-261.4,-110.6 L-262.2,-111.5 L-262.9,-112.3 L-263.7,-113.1 L-264.5,-113.9 L-265.3,-114.7 L-265.6,-115.1 L-266.0,-115.5 L-266.4,-116.0 L-266.8,-116.4 L-267.2,-116.8 L-267.6,-117.2 L-268.0,-117.6 L-268.4,-118.0 L-268.8,-118.4 L-269.2,-118.8 L-269.6,-119.3 L-270.0,-119.7 L-270.4,-120.1 L-270.7,-120.5 L-271.1,-120.9 L-271.5,-121.3 L-271.9,-121.8 L-272.3,-122.2 L-272.7,-122.6 L-273.1,-123.0 L-273.5,-123.4 L-273.9,-123.8 L-274.3,-124.3 L-274.7,-124.7 L-275.1,-125.1 L-275.5,-125.5 L-275.9,-125.9 L-276.3,-126.4 L-276.7,-126.8 L-277.1,-127.2 L-277.5,-127.6 L-277.9,-128.0 L-278.3,-128.5 L-278.7,-128.9 L-279.1,-129.3 L-279.5,-129.7 L-279.9,-130.2 L-280.3,-130.6 L-280.7,-131.0 L-281.1,-131.4 L-281.6,-131.9 L-282.0,-132.3 L-282.4,-132.7 L-282.8,-133.2 L-283.2,-133.6 L-283.6,-134.0 L-284.0,-134.4 L-284.4,-134.9 L-284.8,-135.3 L-285.2,-135.7 L-285.6,-136.2 L-286.0,-136.6 L-286.4,-137.0 L-286.9,-137.5 L-287.3,-137.9 L-287.7,-138.3 L-288.1,-138.8 L-288.5,-139.2 L-288.9,-139.6 L-289.3,-140.1 L-289.7,-140.5 L-290.2,-140.9 L-290.6,-141.4 L-291.0,-141.8 L-291.4,-142.2 L-291.8,-142.7 L-292.2,-143.1 L-292.6,-143.5 L-293.1,-144.0 L-293.5,-144.4 L-293.9,-144.9 L-294.3,-145.3 L-294.7,-145.7 L-295.1,-146.2 L-295.6,-146.6 L-296.0,-147.1 L-296.4,-147.5 L-296.8,-147.9 L-297.2,-148.4 L-297.7,-148.8 L-298.1,-149.3 L-298.5,-149.7 L-298.9,-150.2 L-299.3,-150.6 L-299.8,-151.0 L-300.2,-151.5 L-300.6,-151.9 L-301.0,-152.4 L-301.5,-152.8 L-301.9,-153.3 L-302.3,-153.7 L-302.7,-154.2 L-303.2,-154.6 L-303.6,-155.1 L-304.0,-155.5 L-304.4,-156.0 L-304.9,-156.4 L-305.3,-156.9 L-305.7,-157.3 L-306.2,-157.8 L-306.6,-158.2 L-307.0,-158.7 L-307.4,-159.1 L-307.9,-159.6"/>
<path d="M123.1,313.5 L123.1,314.8 L123.1,315.9 L123.0,317.3 L122.9,318.3 L122.8,319.1 L122.7,319.8 L122.5,320.8 L122.4,321.6 L122.2,322.4 L122.1,323.1 L121.9,323.7 L121.7,324.5 L121.5,325.3 L121.3,326.0 L121.1,326.7 L120.8,327.3 L120.6,327.9 L120.4,328.5 L120.1,329.2 L119.8,329.8 L119.5,330.5 L119.2,331.1 L118.9,331.6 L118.6,332.2 L118.4,332.7 L118.0,333.3 L117.7,333.9 L117.3,334.5 L117.0,335.0 L116.7,335.5 L116.3,336.1 L116.0,336.5 L115.7,337.0 L115.3,337.6 L114.9,338.1 L114.5,338.6 L114.2,339.1 L113.8,339.6 L113.4,340.1 L113.1,340.5 L112.7,341.0 L112.3,341.5 L111.9,342.0 L111.5,342.5 L111.1,343.0 L110.7,343.4 L110.4,343.9 L110.0,344.4 L109.6,344.8 L109.2,345.3 L108.8,345.7 L108.5,346.1 L108.1,346.6 L107.7,347.0 L107.3,347.4 L106.9,347.9 L106.5,348.4 L106.1,348.9 L105.7,349.4 L105.3,349.8 L104.9,350.3 L104.4,350.8 L104.0,351.2 L103.6,351.7 L103.2,352.2 L102.8,352.7 L102.4,353.1 L102.0,353.6 L101.6,354.1 L101.2,354.5 L100.7,355.0 L100.3,355.5 L99.9,356.0 L99.5,356.4 L99.1,356.9 L98.7,357.3 L98.3,357.8 L97.9,358.2 L97.6,358.6 L97.2,359.1 L96.8,359.5 L96.4,359.9 L96.0,360.4 L95.6,360.8 L95.3,361.3 L94.9,361.7 L94.5,362.1 L94.1,362.6 L93.7,363.0 L93.3,363.5 L92.9,364.0 L92.5,364.4 L92.1,364.9 L91.7,365.3 L91.2,365.8 L90.8,366.3 L90.4,366.7 L90.0,367.2 L89.6,367.7 L89.2,368.2 L88.7,368.7 L88.3,369.1 L88.0,369.5 L87.6,369.9 L87.2,370.4 L86.8,370.8 L86.4,371.2 L86.0,371.7 L85.7,372.1 L85.3,372.6 L84.9,373.0 L84.5,373.4 L84.1,373.9 L83.6,374.3 L83.2,374.8 L82.8,375.3 L82.4,375.7 L82.0,376.2 L81.6,376.7 L81.2,377.1 L80.7,377.6 L80.3,378.1 L79.9,378.5 L79.4,379.0 L79.0,379.5 L78.6,380.0 L78.1,380.5 L77.7,380.9 L77.4,381.3 L77.0,381.7 L76.6,382.2 L76.2,382.6 L75.8,383.0 L75.4,383.4 L75.0,383.9 L74.6,384.3 L74.2,384.8 L73.8,385.2 L73.4,385.6 L73.0,386.1 L72.6,386.5 L72.2,387.0 L71.8,387.4 L71.3,387.9 L70.9,388.3 L70.5,388.8 L70.1,389.3 L69.7,389.7 L69.2,390.2 L68.8,390.7 L68.4,391.1 L67.9,391.6 L67.5,392.1 L67.0,392.5 L66.6,393.0 L66.1,393.5 L65.7,394.0 L65.2,394.5 L64.8,395.0 L64.3,395.5 L63.9,395.9 L63.4,396.4 L63.0,396.9 L62.6,397.3 L62.2,397.7 L61.8,398.1 L61.5,398.5 L61.1,399.0 L60.7,399.4 L60.3,399.8 L59.9,400.2 L59.4,400.7 L59.0,401.1 L58.6,401.5 L58.2,402.0 L57.8,402.4 L57.4,402.9 L57.0,403.3 L56.6,403.8 L56.1,404.2 L55.7,404.7 L55.3,405.1 L54.9,405.6 L54.4,406.0 L54.0,406.5 L53.6,406.9 L53.1,407.4 L52.7,407.8 L52.3,408.3 L51.8,408.8 L51.4,409.2 L50.9,409.7 L50.5,410.2 L50.0,410.7 L49.6,411.1 L49.1,411.6 L48.7,412.1 L48.2,412.6 L47.8,413.1 L47.3,413.6 L46.8,414.0 L46.4,414.5 L45.9,415.0 L45.4,415.5 L45.0,416.0 L44.5,416.5 L44.0,417.0 L43.5,417.5 L43.1,418.0 L42.6,418.6 L42.1,419.1 L41.7,419.5 L41.3,419.9 L40.9,420.3 L40.5,420.7 L40.1,421.1 L39.7,421.6 L39.3,422.0 L38.9,422.4 L38.5,422.8 L38.1,423.2 L37.7,423.7 L37.3,424.1 L36.9,424.5 L36.5,425.0 L36.1,425.4 L35.6,425.8 L35.2,426.3 L34.8,426.7 L34.4,427.1 L34.0,427.6 L33.6,428.0 L33.1,428.5 L32.7,428.9 L32.3,429.4 L31.9,429.8 L31.4,430.3 L31.0,430.7 L30.6,431.2 L30.1,431.6 L29.7,432.1 L29.3,432.5 L28.8,433.0 L28.4,433.5 L27.9,433.9 L27.5,434.4 L27.0,434.9 L26.6,435.3 L26.2,435.8 L25.7,436.3 L25.2,436.7 L24.8,437.2 L24.3,437.7 L23.9,438.2 L23.4,438.7 L23.0,439.1 L22.5,439.6 L22.0,440.1 L21.6,440.6 L21.1,441.1 L20.6,441.6 L20.2,442.1 L19.7,442.6 L19.2,443.1 L18.7,443.6 L18.3,444.1 L17.8,444.6 L17.3,445.1 L16.8,445.6 L16.3,446.1 L15.8,446.6 L15.3,447.1 L14.9,447.6 L14.4,448.1 L13.9,448.7 L13.4,449.2 L12.9,449.7 L12.4,450.2 L11.9,450.8 L11.4,451.3 L10.9,451.8 L10.3,452.3 L9.8,452.9 L9.3,453.4 L8.8,454.0 L8.3,454.5 L7.8,455.0 L7.3,455.6 L6.9,456.0 L6.5,456.4 L6.1,456.8 L5.7,457.2 L5.3,457.6 L4.9,458.1 L4.5,458.5 L4.1,458.9 L3.7,459.3 L3.3,459.7 L2.9,460.1 L2.5,460.6 L2.1,461.0 L1.7,461.4 L1.3,461.8 L0.9,462.3 L0.5,462.7 L0.0,463.1 L-0.4,463.6 L-0.8,464.0 L-1.2,464.4 L-1.6,464.9 L-2.0,465.3 L-2.4,465.7 L-2.9,466.2 L-3.3,466.6 L-3.7,467.1 L-4.1,467.5 L-4.5,467.9 L-5.0,468.4 L-5.4,468.8 L-5.8,469.3 L-6.2,469.7 L-6.7,470.2 L-7.1,470.6 L-7.5,471.1 L-8.0,471.5 L-8.4,472.0 L-8.8,472.4 L-9.3,472.9 L-9.7,473.4 L-10.2,473.8 L-10.6,474.3 L-11.0,474.7 L-11.5,475.2 L-11.9,475.7 L-12.4,476.1 L-12.8,476.6 L-13.3,477.1 L-13.7,477.5 L-14.2,478.0 L-14.6,478.5 L-15.1,479.0 L-15.5,479.4 L-16.0,479.9 L-16.4,480.4 L-16.9,480.9 L-17.4,481.3 L-17.8,481.8 L-18.3,482.3 L-18.7,482.8 L-19.2,483.3 L-19.7,483.8 L-20.1,484.3 L-20.6,484.8 L-21.1,485.2 L-21.6,485.7 L-22.0,486.2 L-22.5,486.7 L-23.0,487.2 L-23.4,487.7 L-23.9,488.2 L-24.4,488.7 L-24.9,489.2 L-25.4,489.7 L-25.9,490.2 L-26.3,490.8 L-26.8,491.3 L-27.3,491.8 L-27.8,492.3 L-28.3,492.8 L-28.8,493.3 L-29.3,493.8 L-29.8,494.3 L-30.3,494.9 L-30.8,495.4 L-31.3,495.9 L-31.8,496.4 L-32.3,497.0 L-32.8,497.5 L-33.3,498.0 L-33.8,498.5 L-34.3,499.1 L-34.8,499.6 L-35.3,500.1 L-35.8,500.7 L-36.3,501.2 L-36.8,501.8 L-37.4,502.3 L-37.9,502.8 L-38.4,503.4 L-38.9,503.9 L-39.4,504.5 L-40.0,505.0 L-40.5,505.6 L-41.0,506.1 L-41.5,506.7 L-42.1,507.2 L-42.6,507.8 L-43.1,508.3 L-43.7,508.9 L-44.2,509.5 L-44.7,510.0 L-45.3,510.6 L-45.8,511.2 L-46.4,511.7 L-46.9,512.3 L-47.5,512.9 L-48.0,513.4 L-48.6,514.0 L-49.1,514.6 L-49.7,515.2 L-50.2,515.8 L-50.8,516.3 L-51.3,516.9 L-51.9,517.5 L-52.4,518.1 L-53.0,518.7 L-53.6,519.3 L-54.1,519.9 L-54.7,520.4 L-55.3,521.0 L-55.8,521.6 L-56.4,522.2 L-57.0,522.8 L-57.5,523.4 L-58.1,524.0 L-58.7,524.6 L-59.3,525.2 L-59.8,525.9 L-60.4,526.5 L-61.0,527.1 L-61.6,527.7 L-62.0,528.1 L-62.4,528.5 L-62.8,528.9 L-63.2,529.3 L-63.6,529.7 L-64.0,530.2 L-64.3,530.6 L-64.7,531.0 L-65.1,531.4 L-65.5,531.8 L-65.9,532.2 L-66.3,532.7 L-66.7,533.1 L-67.1,533.5 L-67.5,533.9 L-67.9,534.3 L-68.3,534.8 L-68.7,535.2 L-69.2,535.6 L-69.6,536.0 L-70.0,536.5 L-70.4,536.9 L-70.8,537.3 L-71.2,537.7 L-71.6,538.2 L-72.0,538.6 L-72.4,539.0 L-72.8,539.5 L-73.2,539.9 L-73.7,540.3 L-74.1,540.8 L-74.5,541.2 L-74.9,541.6 L-75.3,542.1 L-75.7,542.5 L-76.2,543.0 L-76.6,543.4 L-77.0,543.8 L-77.4,544.3 L-77.8,544.7 L-78.3,545.2 L-78.7,545.6 L-79.1,546.0 L-79.5,546.5 L-79.9,546.9 L-80.4,547.4 L-80.8,547.8 L-81.2,548.3 L-81.7,548.7 L-82.1,549.2 L-82.5,549.6 L-82.9,550.1 L-83.4,550.5 L-83.8,551.0 L-84.2,551.4 L-84.7,551.9 L-85.1,552.4 L-85.5,552.8 L-86.0,553.3 L-86.4,553.7 L-86.9,554.2 L-87.3,554.7 L-87.7,555.1 L-88.2,555.6 L-88.6,556.0 L-89.1,556.5 L-89.5,557.0 L-90.0,557.4 L-90.4,557.9 L-90.8,558.4 L-91.3,558.8 L-91.7,559.3 L-92.2,559.8 L-92.6,560.2 L-93.1,560.7 L-93.5,561.2 L-94.0,561.7 L-94.4,562.1 L-94.9,562.6 L-95.3,563.1 L-95.8,563.6 L-96.3,564.1 L-96.7,564.5 L-97.2,565.0 L-97.6,565.5 L-98.1,566.0 L-98.6,566.5 L-99.0,566.9 L-99.5,567.4 L-99.9,567.9 L-100.4,568.4 L-100.9,568.9 L-101.3,569.4 L-101.8,569.9 L-102.3,570.4 L-102.7,570.9 L-103.2,571.3 L-103.7,571.8 L-104.1,572.3 L-104.6,572.8 L-105.1,573.3 L-105.6,573.8 L-106.0,574.3 L-106.5,574.8 L-107.0,575.3 L-107.5,575.8 L-107.9,576.3 L-108.4,576.8 L-108.9,577.3 L-109.4,577.8 L-109.9,578.3 L-110.4,578.9 L-110.8,579.4 L-111.3,579.9 L-111.8,580.4 L-112.3,580.9 L-112.8,581.4 L-113.3,581.9 L-113.8,582.4 L-114.3,582.9 L-114.7,583.5 L-115.2,584.0 L-115.7,584.5 L-116.2,585.0 L-116.7,585.5 L-117.2,586.1 L-117.7,586.6 L-118.2,587.1 L-118.7,587.6 L-119.2,588.1 L-119.7,588.7 L-120.2,589.2 L-120.7,589.7 L-121.2,590.3 L-121.7,590.8 L-122.2,591.3 L-122.7,591.8 L-123.2,592.4 L-123.7,592.9 L-124.3,593.5 L-124.8,594.0 L-125.3,594.5 L-125.8,595.1 L-126.3,595.6 L-126.8,596.1 L-127.3,596.7 L-127.9,597.2 L-128.4,597.8 L-128.9,598.3 L-129.4,598.9 L-129.9,599.4 L-130.4,600.0 L-131.0,600.5 L-131.5,601.1 L-132.0,601.6 L-132.5,602.2 L-133.1,602.7 L-133.6,603.3 L-134.1,603.8 L-134.7,604.4 L-135.2,604.9 L-135.7,605.5 L-136.2,606.0 L-136.8,606.6 L-137.3,607.2 L-137.9,607.7 L-138.4,608.3 L-138.9,608.9 L-139.5,609.4 L-140.0,610.0 L-140.5,610.6 L-141.1,611.1 L-141.6,611.7 L-142.2,612.3 L-142.7,612.8 L-143.3,613.4 L-143.8,614.0 L-144.4,614.6 L-144.9,615.1 L-145.5,615.7 L-146.0,616.3 L-146.6,616.9 L-147.1,617.5 L-147.7,618.0 L-148.2,618.6 L-148.8,619.2 L-149.3,619.8 L-149.9,620.4 L-150.5,621.0 L-151.0,621.6 L-151.6,622.1 L-152.1,622.7 L-152.7,623.3 L-153.3,623.9 L-153.8,624.5 L-154.4,625.1 L-155.0,625.7 L-155.5,626.3 L-156.1,626.9 L-156.7,627.5 L-157.2,628.1 L-157.8,628.7 L-158.4,629.3 L-159.0,629.9 L-159.5,630.5 L-160.1,631.1 L-160.7,631.7 L-161.3,632.4 L-161.9,633.0 L-162.4,633.6 L-163.0,634.2 L-163.6,634.8 L-164.2,635.4 L-164.8,636.0 L-165.4,636.7 L-166.0,637.3 L-166.6,637.9 L-167.1,638.5 L-167.7,639.1 L-168.3,639.8 L-168.9,640.4 L-169.5,641.0 L-170.1,641.6 L-170.7,642.3 L-171.3,642.9 L-171.9,643.5 L-172.5,644.2 L-173.1,644.8 L-173.7,645.4 L-174.3,646.1 L-174.9,646.7 L-175.5,647.3 L-176.2,648.0 L-176.8,648.6 L-177.4,649.3 L-178.0,649.9 L-178.6,650.6 L-179.2,651.2 L-179.8,651.9 L-180.4,652.5 L-181.1,653.1 L-181.7,653.8 L-182.3,654.5 L-182.9,655.1 L-183.5,655.8 L-184.2,656.4 L-184.8,657.1 L-185.4,657.7 L-186.0,658.4 L-186.7,659.1 L-187.3,659.7 L-187.9,660.4 L-188.6,661.0 L-189.2,661.7 L-189.8,662.4 L-190.5,663.0 L-191.1,663.7 L-191.7,664.4 L-192.4,665.1 L-193.0,665.7 L-193.7,666.4 L-194.3,667.1 L-195.0,667.8 L-195.6,668.4 L-196.3,669.1 L-196.9,669.8 L-197.5,670.5 L-198.2,671.2 L-198.9,671.9 L-199.5,672.5 L-200.2,673.2 L-200.8,673.9 L-201.5,674.6 L-202.1,675.3 L-202.8,676.0 L-203.4,676.7 L-204.1,677.4 L-204.8,678.1 L-205.4,678.8 L-206.1,679.5 L-206.8,680.2 L-207.4,680.9 L-208.1,681.6 L-208.8,682.3 L-209.4,683.0 L-210.1,683.7 L-210.8,684.4 L-211.5,685.1 L-212.2,685.8 L-212.8,686.6 L-213.5,687.3 L-214.2,688.0 L-214.9,688.7 L-215.6,689.4 L-216.2,690.1 L-216.9,690.9 L-217.6,691.6 L-218.3,692.3 L-219.0,693.0 L-219.7,693.8 L-220.4,694.5 L-221.1,695.2 L-221.8,696.0 L-222.5,696.7 L-223.2,697.4 L-223.9,698.2 L-224.6,698.9 L-225.3,699.6 L-226.0,700.4 L-226.7,701.1 L-227.4,701.9 L-228.1,702.6 L-228.8,703.4 L-229.5,704.1 L-230.2,704.9 L-230.9,705.6 L-231.6,706.4 L-232.4,707.1 L-233.1,707.9 L-233.8,708.6 L-234.5,709.4 L-235.2,710.1 L-236.0,710.9 L-236.7,711.7 L-237.4,712.4 L-238.1,713.2 L-238.9,714.0 L-239.6,714.7 L-240.3,715.5 L-241.1,716.3 L-241.8,717.0 L-242.5,717.8 L-243.3,718.6 L-244.0,719.4 L-244.7,720.1 L-245.5,720.9 L-246.2,721.7 L-247.0,722.5 L-247.7,723.3 L-248.5,724.0 L-249.2,724.8 L-250.0,725.6 L-250.7,726.4 L-251.5,727.2 L-252.2,728.0 L-253.0,728.8 L-253.7,729.6 L-254.5,730.4 L-255.2,731.2 L-256.0,732.0 L-256.8,732.8 L-257.5,733.6 L-258.3,734.4 L-259.1,735.2 L-259.8,736.0 L-260.6,736.8 L-261.4,737.6 L-262.2,738.5 L-262.9,739.3 L-263.7,740.1 L-264.5,740.9 L-265.3,741.7 L-265.6,742.1 L-266.0,742.5 L-266.4,743.0 L-266.8,743.4 L-267.2,743.8 L-267.6,744.2 L-268.0,744.6 L-268.4,745.0 L-268.8,745.4 L-269.2,745.8 L-269.6,746.3 L-270.0,746.7 L-270.4,747.1 L-270.7,747.5 L-271.1,747.9 L-271.5,748.3 L-271.9,748.8 L-272.3,749.2 L-272.7,749.6 L-273.1,750.0 L-273.5,750.4 L-273.9,750.8 L-274.3,751.3 L-274.7,751.7 L-275.1,752.1 L-275.5,752.5 L-275.9,752.9 L-276.3,753.4 L-276.7,753.8 L-277.1,754.2 L-277.5,754.6 L-277.9,755.0 L-278.3,755.5 L-278.7,755.9 L-279.1,756.3 L-279.5,756.7 L-279.9,757.2 L-280.3,757.6 L-280.7,758.0 L-281.1,758.4 L-281.6,758.9 L-282.0,759.3 L-282.4,759.7 L-282.8,760.2 L-283.2,760.6 L-283.6,761.0 L-284.0,761.4 L-284.4,761.9 L-284.8,762.3 L-285.2,762.7 L-285.6,763.2 L-286.0,763.6 L-286.4,764.0 L-286.9,764.5 L-287.3,764.9 L-287.7,765.3 L-288.1,765.8 L-288.5,766.2 L-288.9,766.6 L-289.3,767.1 L-289.7,767.5 L-290.2,767.9 L-290.6,768.4 L-291.0,768.8 L-291.4,769.2 L-291.8,769.7 L-292.2,770.1 L-292.6,770.5 L-293.1,771.0 L-293.5,771.4 L-293.9,771.9 L-294.3,772.3 L-294.7,772.7 L-295.1,773.2 L-295.6,773.6 L-296.0,774.1 L-296.4,774.5 L-296.8,774.9 L-297.2,775.4 L-297.7,775.8 L-298.1,776.3 L-298.5,776.7 L-298.9,777.2 L-299.3,777.6 L-299.8,778.0 L-300.2,778.5 L-300.6,778.9 L-301.0,779.4 L-301.5,779.8 L-301.9,780.3 L-302.3,780.7 L-302.7,781.2 L-303.2,781.6 L-303.6,782.1 L-304.0,782.5 L-304.4,783.0 L-304.9,783.4 L-305.3,783.9 L-305.7,784.3 L-306.2,784.8 L-306.6,785.2 L-307.0,785.7 L-307.4,786.1 L-307.9,786.6"/>
<path d="M100.0,313.5 L159.5,313.5"/>
</g>
<path d="M98.0,311.0 L103.0,316.0 M98.0,316.0 L103.0,311.0" stroke="#0000ff" stroke-width="1" fill="none"/>
<path d="M157.0,311.0 L162.0,316.0 M157.0,316.0 L162.0,311.0" stroke="#0000ff" stroke-width="1" fill="none"/>
<path d="M134.699,263.96659999999997 L141.699,270.96659999999997 M134.699,270.96659999999997 L141.699,263.96659999999997" stroke="#ff0000" stroke-width="1" fill="none"/>
<circle cx="143.0" cy="246.0" r="3.5" stroke="#ff0000" fill="none" stroke-width="1"/>
<path d="M134.699,356.03340000000003 L141.699,363.03340000000003 M134.699,363.03340000000003 L141.699,356.03340000000003" stroke="#ff0000" stroke-width="1" fill="none"/>
<circle cx="143.0" cy="381.0" r="3.5" stroke="#ff0000" fill="none" stroke-width="1"/>
<rect x="151" y="236" width="7" height="7" fill="#ff00ff"/>
<rect x="151" y="384" width="7" height="7" fill="#ff00ff"/>
<rect x="104" y="310" width="7" height="7" fill="#ff00ff"/>
<rect x="138" y="268" width="7" height="7" fill="#ff00ff"/>
<rect x="138" y="352" width="7" height="7" fill="#ff00ff"/>
<rect x="141" y="310" width="7" height="7" fill="#ff00ff"/>
<line x1="41" y1="413.5" x2="44" y2="413.5" stroke="#666"/>
<line x1="275" y1="413.5" x2="278" y2="413.5" stroke="#666"/>
<line x1="41" y1="388.5" x2="44" y2="388.5" stroke="#666"/>
<line x1="275" y1="388.5" x2="278" y2="388.5" stroke="#666"/>
<line x1="41" y1="363.5" x2="44" y2="363.5" stroke="#666"/>
<line x1="275" y1="363.5" x2="278" y2="363.5" stroke="#666"/>
<line x1="41" y1="338.5" x2="44" y2="338.5" stroke="#666"/>
<line x1="275" y1="338.5" x2="278" y2="338.5" stroke="#666"/>
<line x1="41" y1="313.5" x2="44" y2="313.5" stroke="#666"/>
<line x1="275" y1="313.5" x2="278" y2="313.5" stroke="#666"/>
<line x1="41" y1="288.5" x2="44" y2="288.5" stroke="#666"/>
<line x1="275" y1="288.5" x2="278" y2="288.5" stroke="#666"/>
<line x1="41" y1="263.5" x2="44" y2="263.5" stroke="#666"/>
<line x1="275" y1="263.5" x2="278" y2="263.5" stroke="#666"/>
<line x1="41" y1="238.5" x2="44" y2="238.5" stroke="#666"/>
<line x1="275" y1="238.5" x2="278" y2="238.5" stroke="#666"/>
<line x1="41" y1="213.5" x2="44" y2="213.5" stroke="#666"/>
<line x1="275" y1="213.5" x2="278" y2="213.5" stroke="#666"/>
<g font-family="Liberation Sans, sans-serif" font-size="11" fill="#5a5a5a">
<text x="36.5" y="192.0" text-anchor="end" letter-spacing="-0.2">500</text>
<text x="36.5" y="217.0" text-anchor="end" letter-spacing="-0.2">400</text>
<text x="36.5" y="242.0" text-anchor="end" letter-spacing="-0.2">300</text>
<text x="36.5" y="267.0" text-anchor="end" letter-spacing="-0.2">200</text>
<text x="36.5" y="292.0" text-anchor="end" letter-spacing="-0.2">100</text>
<text x="36.5" y="317.0" text-anchor="end" letter-spacing="-0.2">0</text>
<text x="36.5" y="342.0" text-anchor="end" letter-spacing="-0.2">-<tspan dx="1.5">100</tspan></text>
<text x="36.5" y="367.0" text-anchor="end" letter-spacing="-0.2">-<tspan dx="1.5">200</tspan></text>
<text x="36.5" y="392.5" text-anchor="end" letter-spacing="-0.2">-<tspan dx="1.5">300</tspan></text>
<text x="36.5" y="417.5" text-anchor="end" letter-spacing="-0.2">-<tspan dx="1.5">400</tspan></text>
<text x="36.5" y="443.0" text-anchor="end" letter-spacing="-0.2">-<tspan dx="1.5">500</tspan></text>
<text x="38.5" y="453.0" text-anchor="middle" letter-spacing="-0.2">-<tspan dx="1.5">500</tspan></text>
<text x="159.5" y="453.0" text-anchor="middle" letter-spacing="-0.2">0</text>
<text x="278.5" y="453.0" text-anchor="middle" letter-spacing="-0.2">500</text>
<text x="158" y="181" text-anchor="middle">Root Locus Editor (C)</text>
<text x="158" y="469" text-anchor="middle">Real Axis</text>
<text x="430.5" y="181" text-anchor="middle">Open-Loop Bode Editor (C)</text>
<text x="429" y="472" text-anchor="middle">Frequency (rad/sec)</text>
<text x="309.5" y="192.0" text-anchor="end" letter-spacing="-0.2">50</text>
<text x="309.5" y="224.5" text-anchor="end" letter-spacing="-0.2">0</text>
<text x="309.5" y="257.0" text-anchor="end" letter-spacing="-0.2">-<tspan dx="1.5">50</tspan></text>
<text x="309.5" y="289.5" text-anchor="end" letter-spacing="-0.2">-<tspan dx="1.5">100</tspan></text>
<text x="309.5" y="322.0" text-anchor="end" letter-spacing="-0.2">-<tspan dx="1.5">150</tspan></text>
<text x="309.5" y="337.5" text-anchor="end" letter-spacing="-0.2">-<tspan dx="1.5">90</tspan></text>
<text x="309.5" y="372.0" text-anchor="end" letter-spacing="-0.2">-<tspan dx="1.5">180</tspan></text>
<text x="309.5" y="406.5" text-anchor="end" letter-spacing="-0.2">-<tspan dx="1.5">270</tspan></text>
<text x="309.5" y="441.5" text-anchor="end" letter-spacing="-0.2">-<tspan dx="1.5">360</tspan></text>
<text x="305.5" y="456" letter-spacing="-0.2">10</text>
<text x="317.0" y="448.5" font-size="9">1</text>
<text x="384.5" y="456" letter-spacing="-0.2">10</text>
<text x="396.0" y="448.5" font-size="9">2</text>
<text x="463.5" y="456" letter-spacing="-0.2">10</text>
<text x="475.0" y="448.5" font-size="9">3</text>
<text x="542.5" y="456" letter-spacing="-0.2">10</text>
<text x="554.0" y="448.5" font-size="9">4</text>
</g>
<g clip-path="url(#magclip)">
<line x1="313" y1="220.5" x2="551" y2="220.5" stroke="#d98b0a" stroke-dasharray="9 6 3 6" shape-rendering="crispEdges"/>
<path d="M313.5,213.0 L314.0,213.1 L314.4,213.1 L314.9,213.2 L315.4,213.3 L315.9,213.4 L316.3,213.4 L316.8,213.5 L317.3,213.6 L317.8,213.7 L318.2,213.8 L318.7,213.8 L319.2,213.9 L319.7,214.0 L320.1,214.1 L320.6,214.1 L321.1,214.2 L321.6,214.3 L322.0,214.4 L322.5,214.5 L323.0,214.5 L323.5,214.6 L323.9,214.7 L324.4,214.8 L324.9,214.8 L325.4,214.9 L325.8,215.0 L326.3,215.1 L326.8,215.2 L327.3,215.2 L327.7,215.3 L328.2,215.4 L328.7,215.5 L329.2,215.5 L329.6,215.6 L330.1,215.7 L330.6,215.8 L331.1,215.9 L331.5,215.9 L332.0,216.0 L332.5,216.1 L333.0,216.2 L333.4,216.2 L333.9,216.3 L334.4,216.4 L334.9,216.5 L335.3,216.6 L335.8,216.6 L336.3,216.7 L336.8,216.8 L337.2,216.9 L337.7,216.9 L338.2,217.0 L338.7,217.1 L339.1,217.2 L339.6,217.3 L340.1,217.3 L340.6,217.4 L341.0,217.5 L341.5,217.6 L342.0,217.6 L342.5,217.7 L342.9,217.8 L343.4,217.9 L343.9,218.0 L344.4,218.0 L344.8,218.1 L345.3,218.2 L345.8,218.3 L346.3,218.3 L346.7,218.4 L347.2,218.5 L347.7,218.6 L348.2,218.7 L348.6,218.7 L349.1,218.8 L349.6,218.9 L350.1,219.0 L350.5,219.0 L351.0,219.1 L351.5,219.2 L352.0,219.3 L352.4,219.3 L352.9,219.4 L353.4,219.5 L353.9,219.6 L354.3,219.7 L354.8,219.7 L355.3,219.8 L355.8,219.9 L356.2,220.0 L356.7,220.0 L357.2,220.1 L357.7,220.2 L358.1,220.3 L358.6,220.4 L359.1,220.4 L359.6,220.5 L360.0,220.6 L360.5,220.7 L361.0,220.7 L361.5,220.8 L361.9,220.9 L362.4,221.0 L362.9,221.0 L363.4,221.1 L363.8,221.2 L364.3,221.3 L364.8,221.3 L365.3,221.4 L365.7,221.5 L366.2,221.6 L366.7,221.6 L367.2,221.7 L367.6,221.8 L368.1,221.9 L368.6,222.0 L369.1,222.0 L369.5,222.1 L370.0,222.2 L370.5,222.3 L371.0,222.3 L371.4,222.4 L371.9,222.5 L372.4,222.6 L372.9,222.6 L373.3,222.7 L373.8,222.8 L374.3,222.9 L374.8,222.9 L375.2,223.0 L375.7,223.1 L376.2,223.2 L376.7,223.2 L377.1,223.3 L377.6,223.4 L378.1,223.4 L378.6,223.5 L379.0,223.6 L379.5,223.7 L380.0,223.7 L380.5,223.8 L380.9,223.9 L381.4,224.0 L381.9,224.0 L382.4,224.1 L382.8,224.2 L383.3,224.3 L383.8,224.3 L384.3,224.4 L384.7,224.5 L385.2,224.5 L385.7,224.6 L386.2,224.7 L386.6,224.8 L387.1,224.8 L387.6,224.9 L388.1,225.0 L388.5,225.0 L389.0,225.1 L389.5,225.2 L390.0,225.3 L390.4,225.3 L390.9,225.4 L391.4,225.5 L391.9,225.5 L392.3,225.6 L392.8,225.7 L393.3,225.8 L393.8,225.8 L394.2,225.9 L394.7,226.0 L395.2,226.0 L395.7,226.1 L396.1,226.2 L396.6,226.2 L397.1,226.3 L397.6,226.4 L398.0,226.5 L398.5,226.5 L399.0,226.6 L399.5,226.7 L399.9,226.7 L400.4,226.8 L400.9,226.9 L401.4,227.0 L401.8,227.0 L402.3,227.1 L402.8,227.2 L403.3,227.3 L403.7,227.3 L404.2,227.4 L404.7,227.5 L405.2,227.6 L405.6,227.6 L406.1,227.7 L406.6,227.8 L407.1,227.9 L407.5,228.0 L408.0,228.1 L408.5,228.2 L409.0,228.3 L409.4,228.4 L409.9,228.5 L410.4,228.6 L410.9,228.7 L411.3,228.8 L411.8,228.9 L412.3,229.0 L412.8,229.1 L413.2,229.2 L413.7,229.4 L414.2,229.5 L414.7,229.6 L415.1,229.7 L415.6,229.9 L416.1,230.0 L416.6,230.1 L417.0,230.3 L417.5,230.4 L418.0,230.6 L418.5,230.7 L418.9,230.8 L419.4,231.0 L419.9,231.1 L420.4,231.2 L420.8,231.4 L421.3,231.5 L421.8,231.6 L422.3,231.6 L422.7,231.7 L423.2,231.7 L423.7,231.8 L424.2,231.8 L424.6,231.7 L425.1,231.7 L425.6,231.6 L426.1,231.4 L426.5,231.2 L427.0,231.0 L427.5,230.7 L428.0,230.4 L428.4,230.1 L428.9,229.8 L429.4,229.6 L429.9,229.6 L430.3,229.7 L430.8,230.1 L431.3,230.7 L431.8,231.4 L432.2,232.1 L432.7,232.9 L433.2,233.6 L433.7,234.3 L434.1,235.0 L434.6,235.7 L435.1,236.3 L435.6,236.9 L436.0,237.4 L436.5,238.0 L437.0,238.5 L437.5,239.0 L437.9,239.4 L438.4,239.9 L438.9,240.4 L439.4,240.8 L439.8,241.2 L440.3,241.7 L440.8,242.1 L441.3,242.5 L441.7,242.9 L442.2,243.3 L442.7,243.7 L443.2,244.0 L443.6,244.4 L444.1,244.8 L444.6,245.1 L445.1,245.5 L445.5,245.9 L446.0,246.2 L446.5,246.6 L447.0,246.9 L447.4,247.3 L447.9,247.6 L448.4,248.0 L448.9,248.3 L449.3,248.7 L449.8,249.0 L450.3,249.3 L450.8,249.7 L451.2,250.0 L451.7,250.3 L452.2,250.7 L452.7,251.0 L453.1,251.3 L453.6,251.7 L454.1,252.0 L454.6,252.3 L455.0,252.7 L455.5,253.0 L456.0,253.3 L456.5,253.6 L456.9,254.0 L457.4,254.3 L457.9,254.6 L458.4,254.9 L458.8,255.3 L459.3,255.6 L459.8,255.9 L460.3,256.2 L460.7,256.6 L461.2,256.9 L461.7,257.2 L462.2,257.5 L462.6,257.8 L463.1,258.2 L463.6,258.5 L464.1,258.8 L464.5,259.1 L465.0,259.4 L465.5,259.8 L466.0,260.1 L466.4,260.4 L466.9,260.7 L467.4,261.0 L467.9,261.3 L468.3,261.7 L468.8,262.0 L469.3,262.3 L469.8,262.6 L470.2,262.9 L470.7,263.2 L471.2,263.6 L471.7,263.9 L472.1,264.2 L472.6,264.5 L473.1,264.8 L473.6,265.1 L474.0,265.5 L474.5,265.8 L475.0,266.1 L475.5,266.4 L475.9,266.7 L476.4,267.0 L476.9,267.3 L477.4,267.7 L477.8,268.0 L478.3,268.3 L478.8,268.6 L479.3,268.9 L479.7,269.2 L480.2,269.5 L480.7,269.9 L481.2,270.2 L481.6,270.5 L482.1,270.8 L482.6,271.1 L483.1,271.4 L483.5,271.7 L484.0,272.1 L484.5,272.4 L485.0,272.7 L485.4,273.0 L485.9,273.3 L486.4,273.6 L486.9,273.9 L487.3,274.3 L487.8,274.6 L488.3,274.9 L488.8,275.2 L489.2,275.5 L489.7,275.8 L490.2,276.1 L490.7,276.5 L491.1,276.8 L491.6,277.1 L492.1,277.4 L492.6,277.7 L493.0,278.0 L493.5,278.3 L494.0,278.7 L494.5,279.0 L494.9,279.3 L495.4,279.6 L495.9,279.9 L496.4,280.2 L496.8,280.5 L497.3,280.8 L497.8,281.2 L498.3,281.5 L498.7,281.8 L499.2,282.1 L499.7,282.4 L500.2,282.7 L500.6,283.0 L501.1,283.3 L501.6,283.7 L502.1,284.0 L502.5,284.3 L503.0,284.6 L503.5,284.9 L504.0,285.2 L504.4,285.5 L504.9,285.9 L505.4,286.2 L505.9,286.5 L506.3,286.8 L506.8,287.1 L507.3,287.4 L507.8,287.7 L508.2,288.0 L508.7,288.4 L509.2,288.7 L509.7,289.0 L510.1,289.3 L510.6,289.6 L511.1,289.9 L511.6,290.2 L512.0,290.5 L512.5,290.9 L513.0,291.2 L513.5,291.5 L513.9,291.8 L514.4,292.1 L514.9,292.4 L515.4,292.7 L515.8,293.1 L516.3,293.4 L516.8,293.7 L517.3,294.0 L517.7,294.3 L518.2,294.6 L518.7,294.9 L519.2,295.2 L519.6,295.6 L520.1,295.9 L520.6,296.2 L521.1,296.5 L521.5,296.8 L522.0,297.1 L522.5,297.4 L523.0,297.7 L523.4,298.1 L523.9,298.4 L524.4,298.7 L524.9,299.0 L525.3,299.3 L525.8,299.6 L526.3,299.9 L526.8,300.2 L527.2,300.6 L527.7,300.9 L528.2,301.2 L528.7,301.5 L529.1,301.8 L529.6,302.1 L530.1,302.4 L530.6,302.7 L531.0,303.1 L531.5,303.4 L532.0,303.7 L532.5,304.0 L532.9,304.3 L533.4,304.6 L533.9,304.9 L534.4,305.2 L534.8,305.6 L535.3,305.9 L535.8,306.2 L536.3,306.5 L536.7,306.8 L537.2,307.1 L537.7,307.4 L538.2,307.7 L538.6,308.1 L539.1,308.4 L539.6,308.7 L540.1,309.0 L540.5,309.3 L541.0,309.6 L541.5,309.9 L542.0,310.3 L542.4,310.6 L542.9,310.9 L543.4,311.2 L543.9,311.5 L544.3,311.8 L544.8,312.1 L545.3,312.4 L545.8,312.8 L546.2,313.1 L546.7,313.4 L547.2,313.7 L547.7,314.0 L548.1,314.3 L548.6,314.6 L549.1,314.9 L549.6,315.3 L550.0,315.6 L550.5,315.9" fill="none" stroke="#0000ff" stroke-width="1" shape-rendering="crispEdges"/>
</g>
<g clip-path="url(#phclip)">
<line x1="313" y1="368.5" x2="551" y2="368.5" stroke="#d98b0a" stroke-dasharray="9 6 3 6" shape-rendering="crispEdges"/>
<path d="M313.5,334.1 L314.0,334.1 L314.4,334.1 L314.9,334.1 L315.4,334.2 L315.9,334.2 L316.3,334.2 L316.8,334.2 L317.3,334.2 L317.8,334.3 L318.2,334.3 L318.7,334.3 L319.2,334.3 L319.7,334.4 L320.1,334.4 L320.6,334.4 L321.1,334.5 L321.6,334.5 L322.0,334.5 L322.5,334.5 L323.0,334.6 L323.5,334.6 L323.9,334.6 L324.4,334.7 L324.9,334.7 L325.4,334.7 L325.8,334.7 L326.3,334.8 L326.8,334.8 L327.3,334.8 L327.7,334.9 L328.2,334.9 L328.7,334.9 L329.2,335.0 L329.6,335.0 L330.1,335.0 L330.6,335.1 L331.1,335.1 L331.5,335.1 L332.0,335.2 L332.5,335.2 L333.0,335.3 L333.4,335.3 L333.9,335.3 L334.4,335.4 L334.9,335.4 L335.3,335.5 L335.8,335.5 L336.3,335.5 L336.8,335.6 L337.2,335.6 L337.7,335.7 L338.2,335.7 L338.7,335.8 L339.1,335.8 L339.6,335.9 L340.1,335.9 L340.6,335.9 L341.0,336.0 L341.5,336.0 L342.0,336.1 L342.5,336.1 L342.9,336.2 L343.4,336.2 L343.9,336.3 L344.4,336.4 L344.8,336.4 L345.3,336.5 L345.8,336.5 L346.3,336.6 L346.7,336.6 L347.2,336.7 L347.7,336.7 L348.2,336.8 L348.6,336.9 L349.1,336.9 L349.6,337.0 L350.1,337.1 L350.5,337.1 L351.0,337.2 L351.5,337.3 L352.0,337.3 L352.4,337.4 L352.9,337.5 L353.4,337.5 L353.9,337.6 L354.3,337.7 L354.8,337.7 L355.3,337.8 L355.8,337.9 L356.2,338.0 L356.7,338.0 L357.2,338.1 L357.7,338.2 L358.1,338.3 L358.6,338.4 L359.1,338.4 L359.6,338.5 L360.0,338.6 L360.5,338.7 L361.0,338.8 L361.5,338.9 L361.9,339.0 L362.4,339.1 L362.9,339.2 L363.4,339.3 L363.8,339.4 L364.3,339.4 L364.8,339.5 L365.3,339.6 L365.7,339.8 L366.2,339.9 L366.7,340.0 L367.2,340.1 L367.6,340.2 L368.1,340.3 L368.6,340.4 L369.1,340.5 L369.5,340.6 L370.0,340.7 L370.5,340.9 L371.0,341.0 L371.4,341.1 L371.9,341.2 L372.4,341.4 L372.9,341.5 L373.3,341.6 L373.8,341.7 L374.3,341.9 L374.8,342.0 L375.2,342.2 L375.7,342.3 L376.2,342.4 L376.7,342.6 L377.1,342.7 L377.6,342.9 L378.1,343.0 L378.6,343.2 L379.0,343.3 L379.5,343.5 L380.0,343.7 L380.5,343.8 L380.9,344.0 L381.4,344.2 L381.9,344.4 L382.4,344.5 L382.8,344.7 L383.3,344.9 L383.8,345.1 L384.3,345.3 L384.7,345.5 L385.2,345.7 L385.7,345.9 L386.2,346.1 L386.6,346.3 L387.1,346.5 L387.6,346.7 L388.1,346.9 L388.5,347.1 L389.0,347.4 L389.5,347.6 L390.0,347.8 L390.4,348.1 L390.9,348.3 L391.4,348.6 L391.9,348.8 L392.3,349.1 L392.8,349.4 L393.3,349.6 L393.8,349.9 L394.2,350.2 L394.7,350.5 L395.2,350.8 L395.7,351.1 L396.1,351.4 L396.6,351.7 L397.1,352.0 L397.6,352.3 L398.0,352.7 L398.5,353.0 L399.0,353.3 L399.5,353.7 L399.9,354.1 L400.4,354.4 L400.9,354.8 L401.4,355.2 L401.8,355.6 L402.3,356.0 L402.8,356.4 L403.3,356.8 L403.7,357.3 L404.2,357.7 L404.7,358.2 L405.2,358.6 L405.6,359.1 L406.1,359.6 L406.6,360.0 L407.1,360.5 L407.5,361.0 L408.0,361.6 L408.5,362.1 L409.0,362.6 L409.4,363.1 L409.9,363.7 L410.4,364.2 L410.9,364.8 L411.3,365.3 L411.8,365.9 L412.3,366.5 L412.8,367.0 L413.2,367.6 L413.7,368.2 L414.2,368.7 L414.7,369.3 L415.1,369.8 L415.6,370.4 L416.1,370.9 L416.6,371.4 L417.0,371.9 L417.5,372.4 L418.0,372.9 L418.5,373.3 L418.9,373.7 L419.4,374.1 L419.9,374.5 L420.4,374.8 L420.8,375.2 L421.3,375.5 L421.8,375.7 L422.3,376.0 L422.7,376.2 L423.2,376.4 L423.7,376.7 L424.2,376.9 L424.6,377.2 L425.1,377.5 L425.6,377.9 L426.1,378.4 L426.5,379.1 L427.0,380.0 L427.5,381.2 L428.0,382.7 L428.4,384.8 L428.9,387.4 L429.4,390.7 L429.9,394.5 L430.3,398.6 L430.8,402.5 L431.3,406.1 L431.8,409.1 L432.2,411.5 L432.7,413.4 L433.2,415.0 L433.7,416.2 L434.1,417.1 L434.6,417.9 L435.1,418.6 L435.6,419.1 L436.0,419.6 L436.5,420.0 L437.0,420.3 L437.5,420.6 L437.9,420.9 L438.4,421.1 L438.9,421.4 L439.4,421.6 L439.8,421.8 L440.3,422.0 L440.8,422.2 L441.3,422.4 L441.7,422.6 L442.2,422.8 L442.7,423.0 L443.2,423.1 L443.6,423.3 L444.1,423.5 L444.6,423.7 L445.1,423.8 L445.5,424.0 L446.0,424.2 L446.5,424.3 L447.0,424.5 L447.4,424.6 L447.9,424.8 L448.4,425.0 L448.9,425.1 L449.3,425.3 L449.8,425.4 L450.3,425.6 L450.8,425.7 L451.2,425.9 L451.7,426.0 L452.2,426.2 L452.7,426.3 L453.1,426.5 L453.6,426.6 L454.1,426.8 L454.6,426.9 L455.0,427.1 L455.5,427.2 L456.0,427.4 L456.5,427.5 L456.9,427.6 L457.4,427.8 L457.9,427.9 L458.4,428.0 L458.8,428.2 L459.3,428.3 L459.8,428.4 L460.3,428.6 L460.7,428.7 L461.2,428.8 L461.7,428.9 L462.2,429.1 L462.6,429.2 L463.1,429.3 L463.6,429.4 L464.1,429.5 L464.5,429.6 L465.0,429.8 L465.5,429.9 L466.0,430.0 L466.4,430.1 L466.9,430.2 L467.4,430.3 L467.9,430.4 L468.3,430.5 L468.8,430.6 L469.3,430.7 L469.8,430.8 L470.2,430.9 L470.7,431.0 L471.2,431.1 L471.7,431.2 L472.1,431.3 L472.6,431.4 L473.1,431.5 L473.6,431.6 L474.0,431.7 L474.5,431.8 L475.0,431.9 L475.5,432.0 L475.9,432.1 L476.4,432.1 L476.9,432.2 L477.4,432.3 L477.8,432.4 L478.3,432.5 L478.8,432.6 L479.3,432.6 L479.7,432.7 L480.2,432.8 L480.7,432.9 L481.2,433.0 L481.6,433.0 L482.1,433.1 L482.6,433.2 L483.1,433.2 L483.5,433.3 L484.0,433.4 L484.5,433.5 L485.0,433.5 L485.4,433.6 L485.9,433.7 L486.4,433.7 L486.9,433.8 L487.3,433.9 L487.8,433.9 L488.3,434.0 L488.8,434.0 L489.2,434.1 L489.7,434.2 L490.2,434.2 L490.7,434.3 L491.1,434.3 L491.6,434.4 L492.1,434.4 L492.6,434.5 L493.0,434.6 L493.5,434.6 L494.0,434.7 L494.5,434.7 L494.9,434.8 L495.4,434.8 L495.9,434.9 L496.4,434.9 L496.8,435.0 L497.3,435.0 L497.8,435.1 L498.3,435.1 L498.7,435.2 L499.2,435.2 L499.7,435.2 L500.2,435.3 L500.6,435.3 L501.1,435.4 L501.6,435.4 L502.1,435.5 L502.5,435.5 L503.0,435.5 L503.5,435.6 L504.0,435.6 L504.4,435.7 L504.9,435.7 L505.4,435.7 L505.9,435.8 L506.3,435.8 L506.8,435.9 L507.3,435.9 L507.8,435.9 L508.2,436.0 L508.7,436.0 L509.2,436.0 L509.7,436.1 L510.1,436.1 L510.6,436.1 L511.1,436.2 L511.6,436.2 L512.0,436.2 L512.5,436.3 L513.0,436.3 L513.5,436.3 L513.9,436.3 L514.4,436.4 L514.9,436.4 L515.4,436.4 L515.8,436.5 L516.3,436.5 L516.8,436.5 L517.3,436.5 L517.7,436.6 L518.2,436.6 L518.7,436.6 L519.2,436.7 L519.6,436.7 L520.1,436.7 L520.6,436.7 L521.1,436.7 L521.5,436.8 L522.0,436.8 L522.5,436.8 L523.0,436.8 L523.4,436.9 L523.9,436.9 L524.4,436.9 L524.9,436.9 L525.3,437.0 L525.8,437.0 L526.3,437.0 L526.8,437.0 L527.2,437.0 L527.7,437.1 L528.2,437.1 L528.7,437.1 L529.1,437.1 L529.6,437.1 L530.1,437.2 L530.6,437.2 L531.0,437.2 L531.5,437.2 L532.0,437.2 L532.5,437.2 L532.9,437.3 L533.4,437.3 L533.9,437.3 L534.4,437.3 L534.8,437.3 L535.3,437.3 L535.8,437.4 L536.3,437.4 L536.7,437.4 L537.2,437.4 L537.7,437.4 L538.2,437.4 L538.6,437.5 L539.1,437.5 L539.6,437.5 L540.1,437.5 L540.5,437.5 L541.0,437.5 L541.5,437.5 L542.0,437.5 L542.4,437.6 L542.9,437.6 L543.4,437.6 L543.9,437.6 L544.3,437.6 L544.8,437.6 L545.3,437.6 L545.8,437.6 L546.2,437.7 L546.7,437.7 L547.2,437.7 L547.7,437.7 L548.1,437.7 L548.6,437.7 L549.1,437.7 L549.6,437.7 L550.0,437.7 L550.5,437.8" fill="none" stroke="#0000ff" stroke-width="1" shape-rendering="crispEdges"/>
</g>
<line x1="413.4" y1="221.0" x2="413.4" y2="229.3" stroke="#d98b0a"/>
<circle cx="413.4" cy="229.3" r="4.2" fill="#d98b0a"/>
<line x1="362.7" y1="367.8" x2="362.7" y2="339.1" stroke="#d98b0a"/>
<circle cx="362.7" cy="339.1" r="4.2" fill="#d98b0a"/>
<path d="M413.97759737256956,227.26972763919673 L419.97759737256956,233.26972763919673 M413.97759737256956,233.26972763919673 L419.97759737256956,227.26972763919673" stroke="#ff0000" stroke-width="2" fill="none"/>
<path d="M413.97759737256956,368.8448938772417 L419.97759737256956,374.8448938772417 M413.97759737256956,374.8448938772417 L419.97759737256956,368.8448938772417" stroke="#ff0000" stroke-width="2" fill="none"/>
<circle cx="427.6" cy="230.7" r="3.8" stroke="#ff0000" stroke-width="2" fill="none"/>
<circle cx="427.6" cy="381.4" r="3.8" stroke="#ff0000" stroke-width="2" fill="none"/>
<path d="M421.93726068509096,229.77018154487018 L425.93726068509096,233.77018154487018 M421.93726068509096,233.77018154487018 L425.93726068509096,229.77018154487018" stroke="#0000ff" stroke-width="1" fill="none"/>
<path d="M421.93726068509096,374.80455347573877 L425.93726068509096,378.80455347573877 M421.93726068509096,378.80455347573877 L425.93726068509096,374.80455347573877" stroke="#0000ff" stroke-width="1" fill="none"/>
<path d="M427.6925791228533,229.65594361851836 h5 M430.1925791228533,226.65594361851836 v6 M428.1925791228533,227.65594361851836 l4,4 M428.1925791228533,231.65594361851836 l4,-4" stroke="#0000ff" stroke-width="1.2" fill="none"/>
<path d="M427.6925791228533,397.30614657541776 h5 M430.1925791228533,394.30614657541776 v6 M428.1925791228533,395.30614657541776 l4,4 M428.1925791228533,399.30614657541776 l4,-4" stroke="#0000ff" stroke-width="1.2" fill="none"/>
<rect x="313.5" y="188.5" width="237" height="130" fill="none" stroke="#666"/>
<rect x="313.5" y="332.5" width="237" height="106" fill="none" stroke="#666"/>
<line x1="337.5" y1="188.5" x2="337.5" y2="190.5" stroke="#666"/>
<line x1="337.5" y1="318.5" x2="337.5" y2="316.5" stroke="#666"/>
<line x1="351.5" y1="188.5" x2="351.5" y2="190.5" stroke="#666"/>
<line x1="351.5" y1="318.5" x2="351.5" y2="316.5" stroke="#666"/>
<line x1="361.5" y1="188.5" x2="361.5" y2="190.5" stroke="#666"/>
<line x1="361.5" y1="318.5" x2="361.5" y2="316.5" stroke="#666"/>
<line x1="369.5" y1="188.5" x2="369.5" y2="190.5" stroke="#666"/>
<line x1="369.5" y1="318.5" x2="369.5" y2="316.5" stroke="#666"/>
<line x1="375.5" y1="188.5" x2="375.5" y2="190.5" stroke="#666"/>
<line x1="375.5" y1="318.5" x2="375.5" y2="316.5" stroke="#666"/>
<line x1="380.5" y1="188.5" x2="380.5" y2="190.5" stroke="#666"/>
<line x1="380.5" y1="318.5" x2="380.5" y2="316.5" stroke="#666"/>
<line x1="385.5" y1="188.5" x2="385.5" y2="190.5" stroke="#666"/>
<line x1="385.5" y1="318.5" x2="385.5" y2="316.5" stroke="#666"/>
<line x1="389.5" y1="188.5" x2="389.5" y2="190.5" stroke="#666"/>
<line x1="389.5" y1="318.5" x2="389.5" y2="316.5" stroke="#666"/>
<line x1="392.5" y1="188.5" x2="392.5" y2="191.5" stroke="#666"/>
<line x1="392.5" y1="318.5" x2="392.5" y2="315.5" stroke="#666"/>
<line x1="416.5" y1="188.5" x2="416.5" y2="190.5" stroke="#666"/>
<line x1="416.5" y1="318.5" x2="416.5" y2="316.5" stroke="#666"/>
<line x1="430.5" y1="188.5" x2="430.5" y2="190.5" stroke="#666"/>
<line x1="430.5" y1="318.5" x2="430.5" y2="316.5" stroke="#666"/>
<line x1="440.5" y1="188.5" x2="440.5" y2="190.5" stroke="#666"/>
<line x1="440.5" y1="318.5" x2="440.5" y2="316.5" stroke="#666"/>
<line x1="448.5" y1="188.5" x2="448.5" y2="190.5" stroke="#666"/>
<line x1="448.5" y1="318.5" x2="448.5" y2="316.5" stroke="#666"/>
<line x1="454.5" y1="188.5" x2="454.5" y2="190.5" stroke="#666"/>
<line x1="454.5" y1="318.5" x2="454.5" y2="316.5" stroke="#666"/>
<line x1="459.5" y1="188.5" x2="459.5" y2="190.5" stroke="#666"/>
<line x1="459.5" y1="318.5" x2="459.5" y2="316.5" stroke="#666"/>
<line x1="464.5" y1="188.5" x2="464.5" y2="190.5" stroke="#666"/>
<line x1="464.5" y1="318.5" x2="464.5" y2="316.5" stroke="#666"/>
<line x1="468.5" y1="188.5" x2="468.5" y2="190.5" stroke="#666"/>
<line x1="468.5" y1="318.5" x2="468.5" y2="316.5" stroke="#666"/>
<line x1="472.5" y1="188.5" x2="472.5" y2="191.5" stroke="#666"/>
<line x1="472.5" y1="318.5" x2="472.5" y2="315.5" stroke="#666"/>
<line x1="495.5" y1="188.5" x2="495.5" y2="190.5" stroke="#666"/>
<line x1="495.5" y1="318.5" x2="495.5" y2="316.5" stroke="#666"/>
<line x1="509.5" y1="188.5" x2="509.5" y2="190.5" stroke="#666"/>
<line x1="509.5" y1="318.5" x2="509.5" y2="316.5" stroke="#666"/>
<line x1="519.5" y1="188.5" x2="519.5" y2="190.5" stroke="#666"/>
<line x1="519.5" y1="318.5" x2="519.5" y2="316.5" stroke="#666"/>
<line x1="527.5" y1="188.5" x2="527.5" y2="190.5" stroke="#666"/>
<line x1="527.5" y1="318.5" x2="527.5" y2="316.5" stroke="#666"/>
<line x1="533.5" y1="188.5" x2="533.5" y2="190.5" stroke="#666"/>
<line x1="533.5" y1="318.5" x2="533.5" y2="316.5" stroke="#666"/>
<line x1="538.5" y1="188.5" x2="538.5" y2="190.5" stroke="#666"/>
<line x1="538.5" y1="318.5" x2="538.5" y2="316.5" stroke="#666"/>
<line x1="543.5" y1="188.5" x2="543.5" y2="190.5" stroke="#666"/>
<line x1="543.5" y1="318.5" x2="543.5" y2="316.5" stroke="#666"/>
<line x1="547.5" y1="188.5" x2="547.5" y2="190.5" stroke="#666"/>
<line x1="547.5" y1="318.5" x2="547.5" y2="316.5" stroke="#666"/>
<line x1="337.5" y1="332.5" x2="337.5" y2="334.5" stroke="#666"/>
<line x1="351.5" y1="332.5" x2="351.5" y2="334.5" stroke="#666"/>
<line x1="361.5" y1="332.5" x2="361.5" y2="334.5" stroke="#666"/>
<line x1="369.5" y1="332.5" x2="369.5" y2="334.5" stroke="#666"/>
<line x1="375.5" y1="332.5" x2="375.5" y2="334.5" stroke="#666"/>
<line x1="380.5" y1="332.5" x2="380.5" y2="334.5" stroke="#666"/>
<line x1="385.5" y1="332.5" x2="385.5" y2="334.5" stroke="#666"/>
<line x1="389.5" y1="332.5" x2="389.5" y2="334.5" stroke="#666"/>
<line x1="392.5" y1="332.5" x2="392.5" y2="335.5" stroke="#666"/>
<line x1="416.5" y1="332.5" x2="416.5" y2="334.5" stroke="#666"/>
<line x1="416.5" y1="438.5" x2="416.5" y2="436.5" stroke="#666"/>
<line x1="430.5" y1="332.5" x2="430.5" y2="334.5" stroke="#666"/>
<line x1="430.5" y1="438.5" x2="430.5" y2="436.5" stroke="#666"/>
<line x1="440.5" y1="332.5" x2="440.5" y2="334.5" stroke="#666"/>
<line x1="440.5" y1="438.5" x2="440.5" y2="436.5" stroke="#666"/>
<line x1="448.5" y1="332.5" x2="448.5" y2="334.5" stroke="#666"/>
<line x1="448.5" y1="438.5" x2="448.5" y2="436.5" stroke="#666"/>
<line x1="454.5" y1="332.5" x2="454.5" y2="334.5" stroke="#666"/>
<line x1="454.5" y1="438.5" x2="454.5" y2="436.5" stroke="#666"/>
<line x1="459.5" y1="332.5" x2="459.5" y2="334.5" stroke="#666"/>
<line x1="459.5" y1="438.5" x2="459.5" y2="436.5" stroke="#666"/>
<line x1="464.5" y1="332.5" x2="464.5" y2="334.5" stroke="#666"/>
<line x1="464.5" y1="438.5" x2="464.5" y2="436.5" stroke="#666"/>
<line x1="468.5" y1="332.5" x2="468.5" y2="334.5" stroke="#666"/>
<line x1="468.5" y1="438.5" x2="468.5" y2="436.5" stroke="#666"/>
<line x1="472.5" y1="332.5" x2="472.5" y2="335.5" stroke="#666"/>
<line x1="472.5" y1="438.5" x2="472.5" y2="435.5" stroke="#666"/>
<line x1="495.5" y1="332.5" x2="495.5" y2="334.5" stroke="#666"/>
<line x1="495.5" y1="438.5" x2="495.5" y2="436.5" stroke="#666"/>
<line x1="509.5" y1="332.5" x2="509.5" y2="334.5" stroke="#666"/>
<line x1="509.5" y1="438.5" x2="509.5" y2="436.5" stroke="#666"/>
<line x1="519.5" y1="332.5" x2="519.5" y2="334.5" stroke="#666"/>
<line x1="519.5" y1="438.5" x2="519.5" y2="436.5" stroke="#666"/>
<line x1="527.5" y1="332.5" x2="527.5" y2="334.5" stroke="#666"/>
<line x1="527.5" y1="438.5" x2="527.5" y2="436.5" stroke="#666"/>
<line x1="533.5" y1="332.5" x2="533.5" y2="334.5" stroke="#666"/>
<line x1="533.5" y1="438.5" x2="533.5" y2="436.5" stroke="#666"/>
<line x1="538.5" y1="332.5" x2="538.5" y2="334.5" stroke="#666"/>
<line x1="538.5" y1="438.5" x2="538.5" y2="436.5" stroke="#666"/>
<line x1="543.5" y1="332.5" x2="543.5" y2="334.5" stroke="#666"/>
<line x1="543.5" y1="438.5" x2="543.5" y2="436.5" stroke="#666"/>
<line x1="547.5" y1="332.5" x2="547.5" y2="334.5" stroke="#666"/>
<line x1="547.5" y1="438.5" x2="547.5" y2="436.5" stroke="#666"/>
<line x1="314" y1="221.5" x2="317" y2="221.5" stroke="#666"/><line x1="547" y1="221.5" x2="550" y2="221.5" stroke="#666"/>
<line x1="314" y1="254.5" x2="317" y2="254.5" stroke="#666"/><line x1="547" y1="254.5" x2="550" y2="254.5" stroke="#666"/>
<line x1="314" y1="286.5" x2="317" y2="286.5" stroke="#666"/><line x1="547" y1="286.5" x2="550" y2="286.5" stroke="#666"/>
<line x1="314" y1="368.5" x2="317" y2="368.5" stroke="#666"/><line x1="547" y1="368.5" x2="550" y2="368.5" stroke="#666"/>
<line x1="314" y1="402.5" x2="317" y2="402.5" stroke="#666"/><line x1="547" y1="402.5" x2="550" y2="402.5" stroke="#666"/>
<g font-family="Liberation Sans, sans-serif" font-size="11" fill="#000">
<text x="318" y="286">G.M.: 12.7 dB</text>
<text x="318" y="299">Freq: 184 rad/sec</text>
<text x="318" y="312">Stable loop</text>
<text x="318" y="421">P.M.: 73.1 deg</text>
<text x="318" y="434">Freq: 41.9 rad/sec</text>
</g>
</svg>

<!-- status -->
<div class="abs" style="left:18px;top:480px;width:535px;height:31px;background:#d4d0c8;border:1px solid #000"></div>
<div class="t11" style="left:24px;top:483px;letter-spacing:-0.19px">Moved the selected complex poles to s = -90.3 ± 183i</div>
<div class="t11" style="left:24px;top:496px;letter-spacing:-0.22px">Right-click on plots for more design options.</div>
</body></html>
